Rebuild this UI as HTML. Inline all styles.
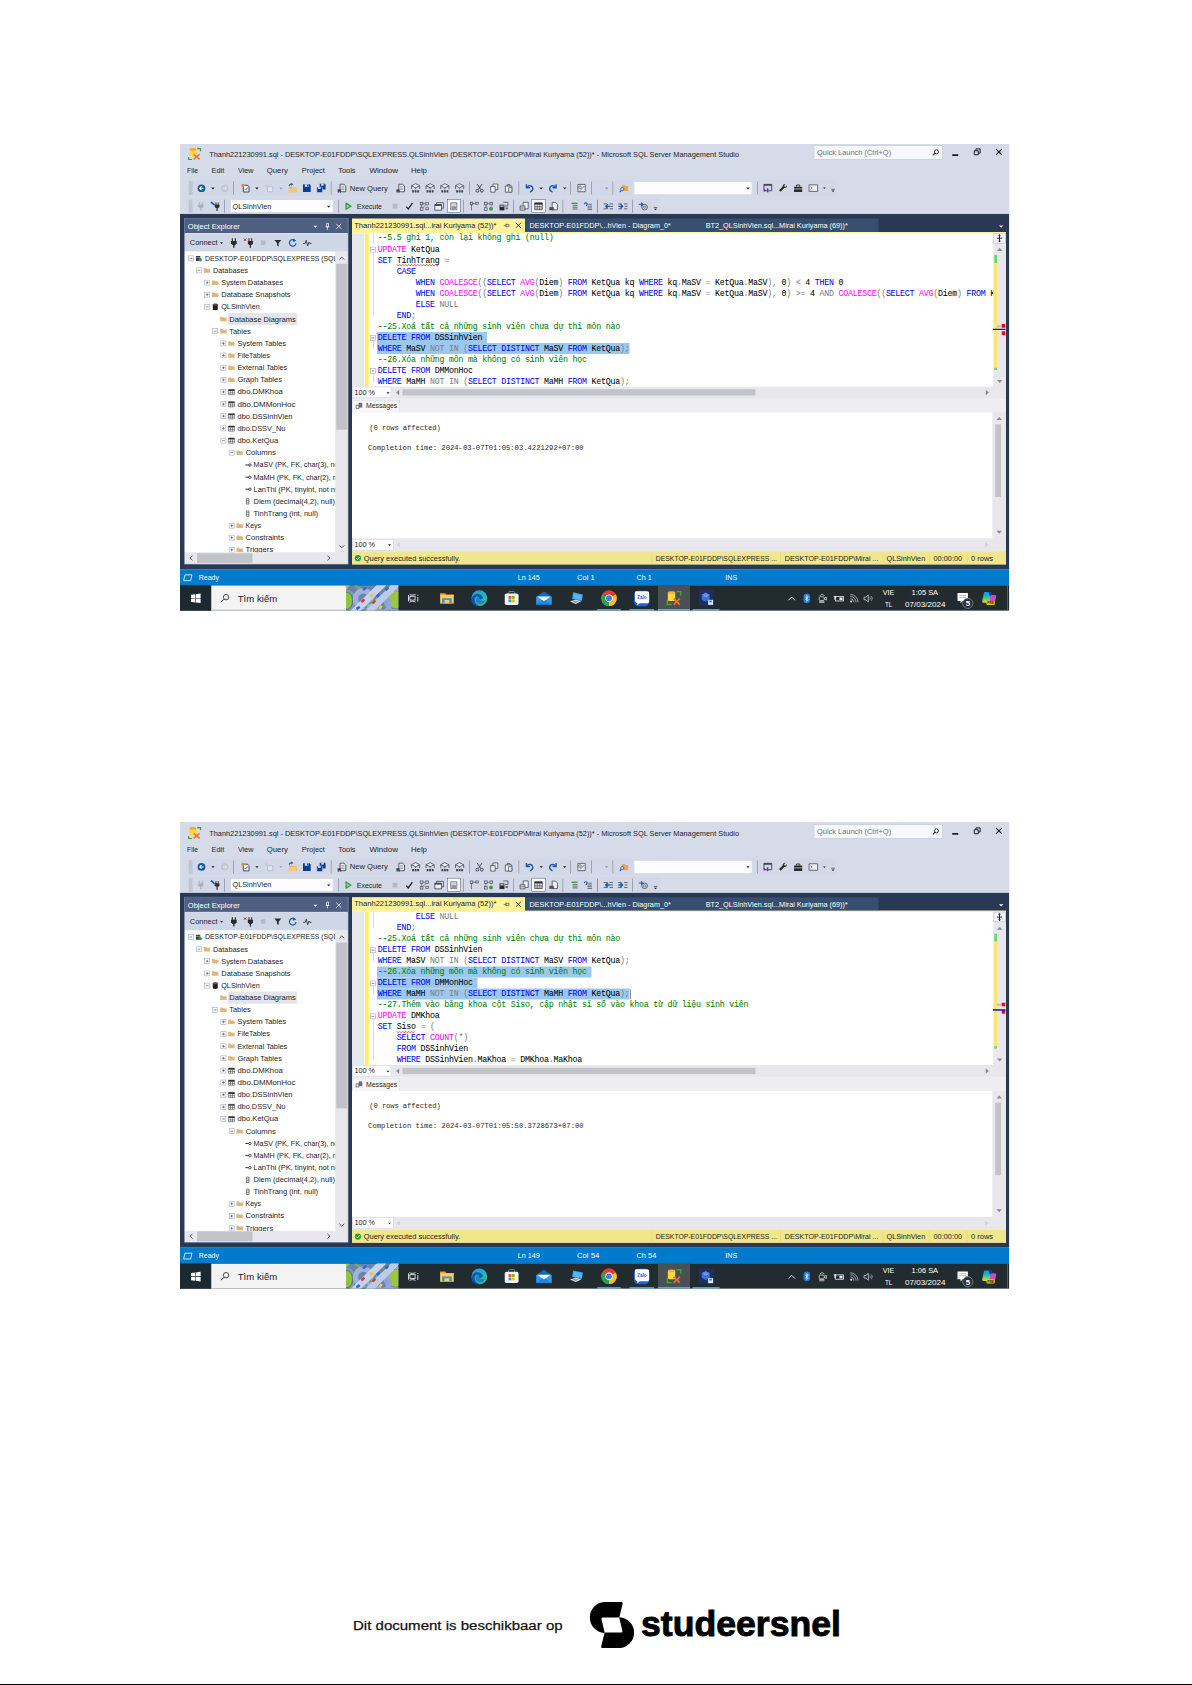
<!DOCTYPE html>
<html><head><meta charset="utf-8"><title>doc</title><style>
html,body{margin:0;padding:0;background:#fff}
body{width:1192px;height:1685px;position:relative;overflow:hidden;font-family:"Liberation Sans",sans-serif}
.shot{position:absolute;width:829.3px;height:466.6px;overflow:hidden;background:#d6dbe9}
.shot div,.shot span,.shot svg,.shot pre{position:absolute;margin:0}
.shot span{white-space:pre;font-family:"Liberation Sans",sans-serif;transform-origin:0 50%}
.shot svg{overflow:visible;display:block}
.clip{overflow:hidden}
pre.cl{font-family:"Liberation Mono",monospace;font-size:8.3px;letter-spacing:-0.231px;line-height:11px;height:11px;color:#000;white-space:pre;-webkit-text-stroke:.04px currentColor}
pre.cl i{font-style:normal}
.c{color:#008000}.k{color:#0000ff}.m{color:#ff00ff}.g{color:#808080}
.sq{text-decoration:underline wavy #e02020;text-decoration-thickness:.5px;text-underline-offset:1.2px}
pre.ms{font-family:"Liberation Mono",monospace;font-size:7.18px;line-height:9.8px;color:#2a2a2a;white-space:pre}
#ft{transform-origin:0 50%;position:absolute;left:353.3px;top:1616.4px;font-size:13.7px;line-height:19px;color:#111;white-space:pre;-webkit-text-stroke:.25px #111}
#lg{position:absolute;left:641.2px;top:1601.5px;font-size:35px;line-height:44px;font-weight:bold;color:#000;white-space:pre;-webkit-text-stroke:.9px #000;transform-origin:0 0}
#zs{position:absolute;left:0;top:0;width:4768px;height:6740px;transform:scale(.25);transform-origin:0 0}
#zz{position:absolute;left:0;top:0;width:1192px;height:1685px;zoom:4}
#bl{position:absolute;left:0;top:1684px;width:1192px;height:1px;background:#000}
</style></head><body><div id="zs"><div id="zz"><div class="shot" style="left:180px;top:144.1px;height:466.6px;"><div style="left:0px;top:69.7px;width:829.3px;height:355.5px;background:#293955;"></div><div style="left:0px;top:0px;width:829.3px;height:69.7px;background:#d6dbe9;"></div><svg style="left:8.05px;top:3.95px" width="13.1" height="12.1" viewBox="0 0 13.1 12.1">
<path d="M.6 9v2.500h3.400" fill="none" stroke="#3a9b35" stroke-width="1.200"></path>
<path d="M9.200.6h3.300v2.600" fill="none" stroke="#3a9b35" stroke-width="1.200"></path>
<path d="M1.400 1.300h7v6c0 1.500-7 1.500-7 0z" fill="#fcd93a"></path>
<ellipse cx="4.900" cy="1.400" rx="3.500" ry="1.300" fill="#f5a834"></ellipse>
<path d="M5.600 6.400l6 5M11.600 6.400l-6 5" stroke="#e8762c" stroke-width="1.500"></path>
</svg><span style="left: 29.2px; top: 5.65px; font-size: 7.5px; line-height: 10px; color: rgb(30, 30, 30); transform: scaleX(0.9805);">Thanh221230991.sql - DESKTOP-E01FDDP\SQLEXPRESS.QLSinhVien (DESKTOP-E01FDDP\Mirai Kuriyama (52))* - Microsoft SQL Server Management Studio</span><div style="left:633.7px;top:1.5px;width:128.8px;height:13.9px;background:#f7f8fc;box-sizing:border-box;border:.6px solid #b4bccf"></div><span style="left: 636.9px; top: 3.25px; font-size: 7.5px; line-height: 10px; color: rgb(109, 114, 132); transform: scaleX(0.9904);">Quick Launch (Ctrl+Q)</span><svg style="left:752.3px;top:5px" width="7" height="7" viewBox="0 0 7 7"><circle cx="4.2" cy="2.8" r="2" fill="none" stroke="#1e1e1e" stroke-width=".9"></circle><path d="M2.8 4.2L.6 6.4" stroke="#1e1e1e" stroke-width="1.1"></path></svg><div style="left:772.3px;top:10.1px;width:6px;height:1.7px;background:#1e1e1e;"></div><svg style="left:793.8px;top:4.2px" width="7" height="7" viewBox="0 0 7 7"><path d="M.5 2.5h4v4h-4z" fill="none" stroke="#1e1e1e" stroke-width="1"></path><path d="M2.2 2.2V.6h4.2v4.2H4.8" fill="none" stroke="#1e1e1e" stroke-width="1"></path></svg><svg style="left:815.7px;top:4.7px" width="6.4" height="6.4" viewBox="0 0 6.4 6.4"><path d="M.4.4l5.6 5.6M6 .4L.4 6" stroke="#1e1e1e" stroke-width="1.1"></path></svg><span style="left: 6.9px; top: 21.55px; font-size: 7.5px; line-height: 10px; color: rgb(30, 30, 30); transform: scaleX(0.9019);">File</span><span style="left: 31.6px; top: 21.55px; font-size: 7.5px; line-height: 10px; color: rgb(30, 30, 30); transform: scaleX(0.9825);">Edit</span><span style="left: 58.1px; top: 21.55px; font-size: 7.5px; line-height: 10px; color: rgb(30, 30, 30); transform: scaleX(0.9677);">View</span><span style="left: 86.8px; top: 21.55px; font-size: 7.5px; line-height: 10px; color: rgb(30, 30, 30); transform: scaleX(1.033);">Query</span><span style="left: 121.8px; top: 21.55px; font-size: 7.5px; line-height: 10px; color: rgb(30, 30, 30); transform: scaleX(0.9853);">Project</span><span style="left: 158.2px; top: 21.55px; font-size: 7.5px; line-height: 10px; color: rgb(30, 30, 30); transform: scaleX(0.9879);">Tools</span><span style="left: 189.5px; top: 21.55px; font-size: 7.5px; line-height: 10px; color: rgb(30, 30, 30); transform: scaleX(1.0684);">Window</span><span style="left: 231px; top: 21.55px; font-size: 7.5px; line-height: 10px; color: rgb(30, 30, 30); transform: scaleX(1.0307);">Help</span><div style="left:6.5px;top:36.5px;width:650px;height:15px;background:#cfd6e5;opacity:.55"></div><div style="left:6.5px;top:54.3px;width:473px;height:14.6px;background:#cfd6e5;opacity:.55"></div><div style="left:8.7px;top:37.2px;width:3.8px;height:13.6px;background:radial-gradient(circle at .45px .45px,#98a1ba .4px,transparent .6px) 0 0/1.9px 1.9px,radial-gradient(circle at 1.4px 1.4px,#98a1ba .4px,transparent .6px) 0 0/1.9px 1.9px;opacity:.75"></div><div style="left:8.7px;top:55.4px;width:3.8px;height:13.6px;background:radial-gradient(circle at .45px .45px,#98a1ba .4px,transparent .6px) 0 0/1.9px 1.9px,radial-gradient(circle at 1.4px 1.4px,#98a1ba .4px,transparent .6px) 0 0/1.9px 1.9px;opacity:.75"></div><svg style="left:16.9px;top:39.6px" width="9" height="9" viewBox="0 0 10 10"><circle cx="5" cy="5" r="4.3" fill="#0f5aa8"></circle><path d="M7.3 5H3.2M5 3L3 5l2 2" fill="none" stroke="#fff" stroke-width="1.2"></path></svg><svg style="left:31.2px;top:43.35px" width="3.4" height="1.9" viewBox="0 0 3.4 1.9"><path d="M0 0H3.4L1.7 1.9Z" fill="#1e1e1e"></path></svg><svg style="left:40.2px;top:39.6px" width="9" height="9" viewBox="0 0 10 10"><circle cx="5" cy="5" r="4.1" fill="#c3c7d1"></circle><path d="M2.8 5h4M5.2 3.2L7 5 5.2 6.8" fill="none" stroke="#e9ebf1" stroke-width="1.1"></path></svg><div style="left:53.2px;top:37.5px;width:0.8px;height:13px;background:#8d92a2;"></div><svg style="left:60.2px;top:38.9px" width="10.2" height="10.2" viewBox="0 0 10 10"><path d="M3 2.2h4.2L8.6 3.8v5H3z" fill="#f6f7fa" stroke="#3b3f4a" stroke-width=".9"></path><path d="M4.3 6.6c1.3-.2 2.4-.6 2.8-2" fill="none" stroke="#3b3f4a" stroke-width=".8"></path><circle cx="2.6" cy="2.3" r="1.5" fill="#ef8a1d"></circle></svg><svg style="left:75.3px;top:43.35px" width="3.4" height="1.9" viewBox="0 0 3.4 1.9"><path d="M0 0H3.4L1.7 1.9Z" fill="#1e1e1e"></path></svg><svg style="left:83.9px;top:38.9px" width="10.2" height="10.2" viewBox="0 0 10 10"><path d="M3.4 3.6h5.2v5H3.4z" fill="#e3e6ee" stroke="#b4b9c6" stroke-width=".8"></path><path d="M1.4 1.4h2.2v2.2H1.4z" fill="#c4c8d4"></path></svg><svg style="left:99.2px;top:43.35px" width="3.4" height="1.9" viewBox="0 0 3.4 1.9"><path d="M0 0H3.4L1.7 1.9Z" fill="#9ba0ae"></path></svg><svg style="left:107.3px;top:38.6px" width="10.4" height="10.4" viewBox="0 0 10 10"><path d="M1.6 3.600h2.600l.8.900h4.200v4.700H1.600z" fill="#e9b45c"></path><path d="M.8 9.200l1.600-3.800h7.200L8 9.200z" fill="#f3c878"></path><path d="M1.400 3.200C1.600 1.600 2.600.8 4 .8V0l1.800 1.500L4 3V2.200c-.9 0-1.400.4-1.500 1z" fill="#1d5fb4"></path></svg><svg style="left:121.8px;top:38.9px" width="10.2" height="10.2" viewBox="0 0 10 10"><path d="M1.2 1.2h6.6l1 1v6.6H1.2z" fill="#0d3e8e"></path><rect x="3" y="1.2" width="3.6" height="2.6" fill="#d6dbe9"></rect><rect x="5.2" y="1.6" width="1" height="1.8" fill="#0d3e8e"></rect></svg><svg style="left:136px;top:38.9px" width="10.2" height="10.2" viewBox="0 0 10 10"><path d="M3.6.8h5l.8.8v4.8H3.6z" fill="#0d3e8e"></path><rect x="5" y=".8" width="2.6" height="1.8" fill="#d6dbe9"></rect><path d="M.8 4h4.8l.8.8v4.6H.8z" fill="#0d3e8e" stroke="#d6dbe9" stroke-width=".5"></path><rect x="2" y="4.2" width="2.6" height="1.7" fill="#d6dbe9"></rect></svg><div style="left:150.8px;top:37.5px;width:0.8px;height:13px;background:#8d92a2;"></div><svg style="left:156.9px;top:38.9px" width="10.2" height="10.2" viewBox="0 0 10 10"><path d="M3 1.2h3.8L8.6 3v5.6H3z" fill="#eef0f5" stroke="#4a4e59" stroke-width=".9"></path><path d="M4.2 3.6h3M4.2 5h3M4.2 6.4h3" stroke="#777c8a" stroke-width=".6"></path><path d="M.6 6.2h3.2v2.2H.6z" fill="#3b3f4a"></path><circle cx="1.4" cy="8.9" r=".7" fill="#3b3f4a"></circle><circle cx="3.2" cy="8.9" r=".7" fill="#3b3f4a"></circle></svg><span style="left: 169.8px; top: 39.05px; font-size: 7.5px; line-height: 10px; color: rgb(30, 30, 30); transform: scaleX(1.0157);">New Query</span><svg style="left:215.7px;top:38.9px" width="10.2" height="10.2" viewBox="0 0 10 10"><path d="M3 1.2h3.8L8.6 3v5.6H3z" fill="#eef0f5" stroke="#4a4e59" stroke-width=".9"></path><path d="M4.2 3.6h3M4.2 5h3M4.2 6.4h3" stroke="#777c8a" stroke-width=".6"></path><path d="M.6 6.2h3.2v2.2H.6z" fill="#3b3f4a"></path><circle cx="1.4" cy="8.9" r=".7" fill="#3b3f4a"></circle><circle cx="3.2" cy="8.9" r=".7" fill="#3b3f4a"></circle></svg><svg style="left:230.5px;top:38.9px" width="10.2" height="10.2" viewBox="0 0 10 10"><path d="M5 .7L9 2.700 5 4.700 1 2.700z" fill="#eef0f5" stroke="#4a4e59" stroke-width=".8" stroke-linejoin="round"></path><path d="M1 2.700v3.300M9 2.700v3.300M5 4.700v1.500" stroke="#4a4e59" stroke-width=".8"></path><path d="M1.600 7h1.800v2.200H1.600zM4.100 7h1.800v2.200H4.100zM6.600 7h1.800v2.200H6.600z" fill="#3b3f4a"></path></svg><svg style="left:245.1px;top:38.9px" width="10.2" height="10.2" viewBox="0 0 10 10"><path d="M5 .7L9 2.700 5 4.700 1 2.700z" fill="#eef0f5" stroke="#4a4e59" stroke-width=".8" stroke-linejoin="round"></path><path d="M1 2.700v3.300M9 2.700v3.300M5 4.700v1.500" stroke="#4a4e59" stroke-width=".8"></path><path d="M1.600 7h1.800v2.200H1.600zM4.100 7h1.800v2.200H4.100zM6.600 7h1.800v2.200H6.600z" fill="#3b3f4a"></path></svg><svg style="left:259.8px;top:38.9px" width="10.2" height="10.2" viewBox="0 0 10 10"><path d="M5 .7L9 2.700 5 4.700 1 2.700z" fill="#eef0f5" stroke="#4a4e59" stroke-width=".8" stroke-linejoin="round"></path><path d="M1 2.700v3.300M9 2.700v3.300M5 4.700v1.500" stroke="#4a4e59" stroke-width=".8"></path><path d="M1.600 7h1.800v2.200H1.600zM4.100 7h1.800v2.200H4.100zM6.600 7h1.800v2.200H6.600z" fill="#3b3f4a"></path></svg><svg style="left:274.6px;top:38.9px" width="10.2" height="10.2" viewBox="0 0 10 10"><path d="M5 .7L9 2.700 5 4.700 1 2.700z" fill="#eef0f5" stroke="#4a4e59" stroke-width=".8" stroke-linejoin="round"></path><path d="M1 2.700v3.300M9 2.700v3.300M5 4.700v1.500" stroke="#4a4e59" stroke-width=".8"></path><path d="M1.600 7h1.800v2.200H1.600zM4.100 7h1.800v2.200H4.100zM6.600 7h1.800v2.200H6.600z" fill="#3b3f4a"></path></svg><div style="left:288.9px;top:37.5px;width:0.8px;height:13px;background:#8d92a2;"></div><svg style="left:294.6px;top:38.9px" width="10.2" height="10.2" viewBox="0 0 10 10"><path d="M2.6 1l3.6 5.4M7.4 1L3.8 6.4" stroke="#3b3f4a" stroke-width=".9"></path><circle cx="2.8" cy="7.6" r="1.4" fill="none" stroke="#3b3f4a" stroke-width=".9"></circle><circle cx="7.2" cy="7.6" r="1.4" fill="none" stroke="#3b3f4a" stroke-width=".9"></circle></svg><svg style="left:309.3px;top:38.9px" width="10.2" height="10.2" viewBox="0 0 10 10"><path d="M3.6 1h4.8v5.6H3.6z" fill="#eef0f5" stroke="#4a4e59" stroke-width=".8"></path><path d="M1.4 3.4h4.4V9H1.4z" fill="#eef0f5" stroke="#4a4e59" stroke-width=".8"></path></svg><svg style="left:323.6px;top:38.9px" width="10.2" height="10.2" viewBox="0 0 10 10"><path d="M1.8 3h6.4v6H1.8z" fill="#eef0f5" stroke="#4a4e59" stroke-width=".8"></path><path d="M3.6 3V1.6h2.8V3" fill="none" stroke="#4a4e59" stroke-width=".8"></path><path d="M5 4.6h3.2V9H5z" fill="#eef0f5" stroke="#4a4e59" stroke-width=".7"></path></svg><div style="left:338.4px;top:37.5px;width:0.8px;height:13px;background:#8d92a2;"></div><svg style="left:343.9px;top:38.3px" width="11" height="11" viewBox="0 0 10 10"><path d="M2.2 1.6v3.2h3.2" fill="none" stroke="#1a5db0" stroke-width="1.3"></path><path d="M2.6 4.4C4 2.4 7.4 2.4 8 5.2c.3 1.6-.8 2.8-2.6 3.6" fill="none" stroke="#1a5db0" stroke-width="1.3"></path></svg><svg style="left:359.6px;top:43.35px" width="3.4" height="1.9" viewBox="0 0 3.4 1.9"><path d="M0 0H3.4L1.7 1.9Z" fill="#1e1e1e"></path></svg><svg style="left:367.4px;top:38.3px" width="11" height="11" viewBox="0 0 10 10"><path d="M7.8 1.6v3.2H4.6" fill="none" stroke="#1a5db0" stroke-width="1.3"></path><path d="M7.4 4.4C6 2.4 2.6 2.4 2 5.2c-.3 1.6.8 2.8 2.6 3.6" fill="none" stroke="#1a5db0" stroke-width="1.3"></path></svg><svg style="left:383.1px;top:43.35px" width="3.4" height="1.9" viewBox="0 0 3.4 1.9"><path d="M0 0H3.4L1.7 1.9Z" fill="#1e1e1e"></path></svg><div style="left:389.9px;top:37.5px;width:0.8px;height:13px;background:#8d92a2;"></div><svg style="left:396.6px;top:38.9px" width="10.2" height="10.2" viewBox="0 0 10 10"><path d="M1.4 1.4h7.2v7.2H1.4z" fill="#e9ecf3" stroke="#5a5f6b" stroke-width=".9"></path><circle cx="3.4" cy="4" r="1.3" fill="none" stroke="#5a5f6b" stroke-width=".7"></circle><path d="M3.6 7.4L7.6 3" stroke="#5a5f6b" stroke-width=".8"></path></svg><div style="left:411.2px;top:37.5px;width:0.8px;height:13px;background:#8d92a2;"></div><svg style="left:425px;top:43.35px" width="3.4" height="1.9" viewBox="0 0 3.4 1.9"><path d="M0 0H3.4L1.7 1.9Z" fill="#8d92a1"></path></svg><div style="left:432.4px;top:37.5px;width:0.8px;height:13px;background:#8d92a2;"></div><svg style="left:438.9px;top:38.9px" width="10.2" height="10.2" viewBox="0 0 10 10"><path d="M3 2h2.4l.8.9H9v4.9H3z" fill="#e7a944"></path><circle cx="3.2" cy="6" r="1.6" fill="#d6dbe9" stroke="#1a5db0" stroke-width=".8"></circle><path d="M2.2 7.2L.8 9" stroke="#1a5db0" stroke-width="1"></path></svg><div style="left:453.8px;top:37.3px;width:118.5px;height:13.5px;background:#fdfdff;box-sizing:border-box;border:.6px solid #c3c9d9"></div><svg style="left:566.3px;top:43.35px" width="3.4" height="1.9" viewBox="0 0 3.4 1.9"><path d="M0 0H3.4L1.7 1.9Z" fill="#1e1e1e"></path></svg><div style="left:577.3px;top:37.5px;width:0.8px;height:13px;background:#8d92a2;"></div><svg style="left:582.8px;top:38.9px" width="10.2" height="10.2" viewBox="0 0 10 10"><path d="M1.2 1.4h7.6v6.2H1.2z" fill="none" stroke="#3b3f4a" stroke-width=".9"></path><path d="M1.2 1.4h7.6v1.4H1.2z" fill="#3b3f4a"></path><path d="M1 5.6l2.2 1.6L1 8.8zM4.6 5l-1 2.2 1 2.2.9-.4V5.4z" fill="#7b2fa0"></path></svg><svg style="left:598.1px;top:38.9px" width="10.2" height="10.2" viewBox="0 0 10 10"><path d="M8.6 2.2L7 3.8 5.8 2.6 7.4 1C6 .6 4.4 1.600 4.600 3.400L1 7l1.600 1.600L6.200 5c1.800.200 2.800-1.400 2.400-2.800z" fill="#2b2b2b"></path></svg><svg style="left:612.9px;top:38.9px" width="10.2" height="10.2" viewBox="0 0 10 10"><path d="M1 3.600h8v5.200H1z" fill="#2b2b2b"></path><path d="M3.400 3.600V2h3.200v1.600" fill="none" stroke="#2b2b2b" stroke-width=".9"></path><path d="M1 5.800h8" stroke="#d6dbe9" stroke-width=".7"></path></svg><svg style="left:628.2px;top:38.9px" width="10.2" height="10.2" viewBox="0 0 10 10"><path d="M.8 1.800h8.400v6.400H.8z" fill="#eef0f5" stroke="#4a4e59" stroke-width=".8"></path><path d="M2.400 3.800l1.400 1.200-1.400 1.200" fill="none" stroke="#4a4e59" stroke-width=".7"></path></svg><svg style="left:642.9px;top:43.5px" width="2.8" height="1.6" viewBox="0 0 2.8 1.6"><path d="M0 0H2.8L1.4 1.6Z" fill="#1e1e1e"></path></svg><svg style="left:649.9px;top:43.2px" width="6" height="6" viewBox="0 0 10 10"><path d="M2 3.400h6" stroke="#1e1e1e" stroke-width="1"></path><path d="M2.400 5.400h5.200L5 8z" fill="#1e1e1e"></path></svg><svg style="left:15.7px;top:57.1px" width="10.2" height="10.2" viewBox="0 0 10 10"><path d="M3.600.8v2.400M6.400.8v2.400" stroke="#a9aebb" stroke-width=".9"></path><path d="M2.400 3.200h5.200v2.200L6.200 6.800H3.800L2.400 5.400z" fill="#a9aebb"></path><path d="M5 6.800v2.600" stroke="#a9aebb" stroke-width="1"></path></svg><svg style="left:30.3px;top:57.1px" width="10.2" height="10.2" viewBox="0 0 10 10"><path d="M5.600 1.200v2.200M7.800 1.200v2.200" stroke="#2b2b2b" stroke-width=".9"></path><path d="M4.400 3.200h4.600v2.200L7.800 6.800H5.600L4.400 5.400z" fill="#2b2b2b"></path><path d="M6.700 6.800v2.800" stroke="#2b2b2b" stroke-width="1.200"></path><path d="M.8.800l3.600 3" stroke="#1a5db0" stroke-width="1.600"></path><path d="M.4 1.800L1.800.4" stroke="#1a5db0" stroke-width=".8"></path></svg><div style="left:44.3px;top:55.7px;width:0.8px;height:13px;background:#8d92a2;"></div><div style="left:50.5px;top:55.4px;width:102.7px;height:13.1px;background:#fdfdff;box-sizing:border-box;border:.6px solid #c3c9d9"></div><span style="left: 52.6px; top: 56.85px; font-size: 7.5px; line-height: 10px; color: rgb(30, 30, 30); transform: scaleX(0.9726);">QLSinhVien</span><svg style="left:147px;top:61.55px" width="3.4" height="1.9" viewBox="0 0 3.4 1.9"><path d="M0 0H3.4L1.7 1.9Z" fill="#1e1e1e"></path></svg><div style="left:158px;top:55.7px;width:0.8px;height:13px;background:#8d92a2;"></div><svg style="left:163.9px;top:58px" width="8.4" height="8.4" viewBox="0 0 10 10"><path d="M2.400 1.200L8.400 5l-6 3.800z" fill="#8fd08f" stroke="#2f9a35" stroke-width="1.300" stroke-linejoin="round"></path></svg><span style="left: 176.8px; top: 57.25px; font-size: 7.5px; line-height: 10px; color: rgb(30, 30, 30); transform: scaleX(0.9298);">Execute</span><svg style="left:211.1px;top:58.2px" width="8" height="8" viewBox="0 0 10 10"><rect x="2" y="2" width="6" height="6" fill="#b5b9c5"></rect></svg><svg style="left:225.1px;top:57.9px" width="8.6" height="8.6" viewBox="0 0 10 10"><path d="M1.400 5.400l2.400 2.800L8.600 1.400" fill="none" stroke="#1e1e1e" stroke-width="1.500"></path></svg><svg style="left:239.2px;top:57.1px" width="10.2" height="10.2" viewBox="0 0 10 10"><rect x="1" y="1" width="2.600" height="2.600" fill="none" stroke="#4a4e59" stroke-width=".7"></rect><rect x="6.400" y="1" width="2.600" height="2.600" fill="none" stroke="#4a4e59" stroke-width=".7"></rect><rect x="1" y="6.400" width="2.600" height="2.600" fill="none" stroke="#4a4e59" stroke-width=".7"></rect><rect x="6.400" y="6.400" width="2.600" height="2" fill="none" stroke="#4a4e59" stroke-width=".7"></rect><path d="M3.600 2.300h2.800M2.300 3.600v2.800M3.600 6.600L6.400 3.600" stroke="#4a4e59" stroke-width=".6"></path></svg><svg style="left:254px;top:57.1px" width="10.2" height="10.2" viewBox="0 0 10 10"><path d="M2.600 1.400h6.600v5.400H2.600z" fill="#eef0f5" stroke="#3b3f4a" stroke-width=".8"></path><path d="M.8 3.200h6.600v5.600H.8z" fill="#eef0f5" stroke="#3b3f4a" stroke-width=".8"></path><path d="M.8 3.200h6.600v1.400H.8z" fill="#3b3f4a"></path></svg><div style="left:267.1px;top:55.1px;width:13.4px;height:13.6px;background:#f8f9fc;box-sizing:border-box;border:.7px solid #3d4d72"></div><svg style="left:269.5px;top:57.9px" width="8.6" height="8.6" viewBox="0 0 10 10"><path d="M1.400 1h7.200v8H1.400z" fill="#d5d8e0" stroke="#5a5f6b" stroke-width=".8"></path><rect x="2.400" y="5" width="5.200" height="3.200" fill="#8d919c"></rect></svg><div style="left:283px;top:55.7px;width:0.8px;height:13px;background:#8d92a2;"></div><svg style="left:289.2px;top:57.1px" width="10.2" height="10.2" viewBox="0 0 10 10"><rect x="1" y="1" width="2.400" height="2.400" fill="none" stroke="#4a4e59" stroke-width=".7"></rect><rect x="6.400" y="1" width="2.400" height="2" fill="none" stroke="#4a4e59" stroke-width=".7"></rect><path d="M3.400 2.200h3M2.200 3.400V9" stroke="#4a4e59" stroke-width=".7"></path></svg><svg style="left:303.5px;top:57.1px" width="10.2" height="10.2" viewBox="0 0 10 10"><rect x="1" y="1" width="2.600" height="2.600" fill="none" stroke="#4a4e59" stroke-width=".7"></rect><rect x="6.400" y="1" width="2.600" height="2.600" fill="none" stroke="#4a4e59" stroke-width=".7"></rect><rect x="1" y="6.400" width="2.600" height="2.600" fill="none" stroke="#4a4e59" stroke-width=".7"></rect><path d="M3.600 2.300h2.800M2.300 3.600v2.800" stroke="#4a4e59" stroke-width=".6"></path><circle cx="7.400" cy="7.400" r="1.900" fill="#3c9b3c"></circle></svg><svg style="left:318.6px;top:57.1px" width="10.2" height="10.2" viewBox="0 0 10 10"><path d="M1 3.400h4.800V9H1z" fill="#2b2b2b"></path><path d="M1.800 4.200h3.200v1.200H1.800z" fill="#d6dbe9"></path><path d="M4.600 1h4.600v3.600H6.400" fill="none" stroke="#4a4e59" stroke-width=".8"></path><path d="M6.800 6h2.400v2H6.800z" fill="#6a6f7c"></path></svg><div style="left:333px;top:55.7px;width:0.8px;height:13px;background:#8d92a2;"></div><svg style="left:339.3px;top:57.1px" width="10.2" height="10.2" viewBox="0 0 10 10"><path d="M3.800 1h5v6.400h-5z" fill="#eef0f5" stroke="#4a4e59" stroke-width=".8"></path><path d="M.8 4.600h4.800v4.200H.8z" fill="#c9cdd8" stroke="#4a4e59" stroke-width=".7"></path><path d="M.8 6.600h4.800" stroke="#4a4e59" stroke-width=".5"></path></svg><div style="left:351.4px;top:55.1px;width:14.3px;height:13.6px;background:#f8f9fc;box-sizing:border-box;border:.7px solid #3d4d72"></div><svg style="left:354px;top:57.7px" width="9" height="9" viewBox="0 0 10 10"><path d="M.8 1.200h8.400v7.600H.8z" fill="#fff" stroke="#2b2b2b" stroke-width=".8"></path><path d="M.8 1.200h8.400v2H.8z" fill="#2b2b2b"></path><path d="M.8 5.200h8.400M.8 7h8.400M3.600 3.200v5.600M6.400 3.200v5.600" stroke="#2b2b2b" stroke-width=".6"></path></svg><svg style="left:368.5px;top:57.1px" width="10.2" height="10.2" viewBox="0 0 10 10"><path d="M3.600 1.200h3.400L8.800 3v5.400H3.600z" fill="#eef0f5" stroke="#4a4e59" stroke-width=".8"></path><path d="M.8 5.800h4.400v3H.8z" fill="#4a4e59"></path></svg><div style="left:382.4px;top:55.7px;width:0.8px;height:13px;background:#8d92a2;"></div><svg style="left:389.2px;top:57.5px" width="9.4" height="9.4" viewBox="0 0 10 10"><path d="M2.400 2h6.400" stroke="#3c9b3c" stroke-width="1.500"></path><path d="M3.600 4.400h5.200M3.600 6.200h5.200M3.600 8h5.200" stroke="#555b66" stroke-width=".9"></path></svg><svg style="left:403.3px;top:57.5px" width="9.4" height="9.4" viewBox="0 0 10 10"><path d="M1 2.800C1.400 1 4.200 1 4.200 2.800 4.200 3.800 3.200 3.800 3.200 4.800" fill="none" stroke="#1a5db0" stroke-width="1.200"></path><path d="M5.400 3h3.800M4.600 5h4.600M4.600 6.800h4.600M4.600 8.600h4.600" stroke="#555b66" stroke-width=".9"></path></svg><div style="left:417.1px;top:55.7px;width:0.8px;height:13px;background:#8d92a2;"></div><svg style="left:423.3px;top:57.1px" width="10.2" height="10.2" viewBox="0 0 10 10"><path d="M.4 2.600h3.400M6.200 2.600h3.400M.4 7.400h3.400M6.200 7.400h3.400M6.600 5h3" stroke="#555b66" stroke-width=".9"></path><path d="M6.600 5H2.800M4.600 2.800L2.400 5l2.200 2.200" fill="none" stroke="#1a5db0" stroke-width="1.300"></path></svg><svg style="left:437.8px;top:57.1px" width="10.2" height="10.2" viewBox="0 0 10 10"><path d="M.4 2.600h3.400M6.200 2.600h3.400M.4 7.400h3.400M6.200 7.400h3.400M6.800 5h2.800" stroke="#555b66" stroke-width=".9"></path><path d="M.6 5h3.800M2.600 2.800L4.800 5 2.600 7.200" fill="none" stroke="#1a5db0" stroke-width="1.300"></path></svg><div style="left:452px;top:55.7px;width:0.8px;height:13px;background:#8d92a2;"></div><svg style="left:458.2px;top:57.1px" width="10.2" height="10.2" viewBox="0 0 10 10"><circle cx="6.200" cy="5.800" r="2.800" fill="none" stroke="#4a4e59" stroke-width=".8"></circle><circle cx="6.200" cy="5.800" r="1.200" fill="none" stroke="#4a4e59" stroke-width=".6"></circle><path d="M.6 3h3.600M2.800 1.400L4.400 3 2.800 4.600" fill="none" stroke="#1a5db0" stroke-width="1.100"></path></svg><svg style="left:472.6px;top:61.4px" width="6" height="6" viewBox="0 0 10 10"><path d="M2 3.400h6" stroke="#1e1e1e" stroke-width="1"></path><path d="M2.400 5.400h5.200L5 8z" fill="#1e1e1e"></path></svg><div style="left:4.2px;top:73.9px;width:164.2px;height:346.4px;background:#8593b4;"></div><div style="left:4.8px;top:74.2px;width:163px;height:15.2px;background:#4d6082;"></div><span style="left: 7.8px; top: 77.05px; font-size: 8px; line-height: 10px; color: rgb(255, 255, 255); transform: scaleX(0.945);">Object Explorer</span><svg style="left:133.6px;top:81.65px" width="3.8" height="2.1" viewBox="0 0 3.8 2.1"><path d="M0 0H3.8L1.9 2.1Z" fill="#ffffff"></path></svg><svg style="left:145px;top:78.8px" width="5" height="7" viewBox="0 0 5 7"><path d="M1.500.500h2v3.200h-2z" fill="none" stroke="#fff" stroke-width=".7"></path><path d="M.6 3.900h3.800M2.500 3.900v2.800" stroke="#fff" stroke-width=".7"></path></svg><svg style="left:156.1px;top:79.5px" width="5.6" height="5.6" viewBox="0 0 5.6 5.6"><path d="M.3.300l5 5M5.300.3l-5 5" stroke="#fff" stroke-width=".8"></path></svg><div style="left:5px;top:88.9px;width:162.6px;height:330.6px;background:#e4e6ee;"></div><div style="left:4.8px;top:89.4px;width:163px;height:18.1px;background:#cfd6e5;"></div><span style="left: 9.8px; top: 93.35px; font-size: 7.8px; line-height: 10px; color: rgb(30, 30, 30); transform: scaleX(0.9572);">Connect</span><svg style="left:40px;top:98.25px" width="3" height="1.7" viewBox="0 0 3 1.7"><path d="M0 0H3L1.5 1.7Z" fill="#1e1e1e"></path></svg><svg style="left:48.7px;top:93.7px" width="10.2" height="10.2" viewBox="0 0 10 10"><path d="M3.500.6v2.800M6.500.6v2.800" stroke="#2b2b2b" stroke-width="1.100"></path><path d="M2.200 3.200h5.600v2.400L6.400 7.200H3.600L2.200 5.600z" fill="#2b2b2b"></path><path d="M5 7v2.800" stroke="#2b2b2b" stroke-width="1.300"></path></svg><svg style="left:63.3px;top:93.7px" width="10.2" height="10.2" viewBox="0 0 10 10"><path d="M5.700.6v2.800M8.300.6v2.800" stroke="#2b2b2b" stroke-width="1"></path><path d="M4.500 3.200h5v2.400L8.300 7.200H5.700L4.500 5.600z" fill="#2b2b2b"></path><path d="M7 7v2.800" stroke="#2b2b2b" stroke-width="1.200"></path><path d="M.6.800l2.400 2.400M3 .8L.6 3.200" stroke="#d32424" stroke-width=".9"></path></svg><svg style="left:79.6px;top:95px" width="7.4" height="7.4" viewBox="0 0 10 10"><rect x="2" y="2" width="6" height="6" fill="#b5b9c5"></rect></svg><svg style="left:93.8px;top:94.8px" width="8.2" height="8.2" viewBox="0 0 10 10"><path d="M.8 1.200h8.400L6 5v4L4 7.800V5z" fill="#2b2b2b"></path></svg><svg style="left:108.1px;top:94px" width="9.4" height="9.4" viewBox="0 0 10 10"><path d="M7.900 3.200A3.500 3.500 0 1 0 8.500 5.600" fill="none" stroke="#1a5db0" stroke-width="1.300"></path><path d="M5.400.4l3.200 2.400-3.400 1.400z" fill="#1a5db0"></path></svg><svg style="left:122.8px;top:94.5px" width="9.2" height="9.2" viewBox="0 0 10 10"><path d="M.4 5.400h2.200L3.800 2l1.600 6 1.400-4 .8 1.400h2" fill="none" stroke="#2b2b2b" stroke-width=".9"></path></svg><div class="clip" style="left:4.8px;top:107.5px;width:150.8px;height:300.9px;background:#fff"><div style="left:43px;top:61.3px;width:69.4px;height:12.1px;background:#e4e5ea;"></div><svg style="left:3.1px;top:3.8px" width="5.8" height="5.8" viewBox="0 0 5.8 5.8"><rect x=".4" y=".4" width="5" height="5" fill="#fff" stroke="#a4a9b8" stroke-width=".6"></rect><path d="M1.500 2.900h2.800" stroke="#5b6577" stroke-width=".7"></path></svg><svg style="left:10.8px;top:3.5px" width="6.6" height="6.6" viewBox="0 0 6.6 6.6"><path d="M.4 1h4.400v5H.4z" fill="#3a3d46"></path><path d="M.4 2.600h4.400" stroke="#d8dbe3" stroke-width=".5"></path><circle cx="4.800" cy="4.800" r="1.700" fill="#2f9e3b"></circle></svg><span class="tr" style="left: 20.1px; top: 1.35px; font-size: 8px; line-height: 10px; color: rgb(30, 30, 30); transform: scaleX(0.8609);">DESKTOP-E01FDDP\SQLEXPRESS (SQL</span><svg style="left:11.25px;top:15.95px" width="5.8" height="5.8" viewBox="0 0 5.8 5.8"><rect x=".4" y=".4" width="5" height="5" fill="#fff" stroke="#a4a9b8" stroke-width=".6"></rect><path d="M1.500 2.900h2.800" stroke="#5b6577" stroke-width=".7"></path></svg><svg style="left:19.05px;top:15.65px" width="6.4" height="5.4" viewBox="0 0 6.4 5.4"><path d="M0 .9h2.400l.7.800h3.300v3.700H0z" fill="#dcb67a"></path></svg><span class="tr" style="left: 28.22px; top: 13.5px; font-size: 8px; line-height: 10px; color: rgb(30, 30, 30); transform: scaleX(0.912);">Databases</span><svg style="left:19.4px;top:28.1px" width="5.8" height="5.8" viewBox="0 0 5.8 5.8"><rect x=".4" y=".4" width="5" height="5" fill="#fff" stroke="#a4a9b8" stroke-width=".6"></rect><path d="M1.500 2.900h2.800" stroke="#5b6577" stroke-width=".7"></path><path d="M2.900 1.500v2.800" stroke="#4b5567" stroke-width=".7"></path></svg><svg style="left:27.2px;top:27.8px" width="6.4" height="5.4" viewBox="0 0 6.4 5.4"><path d="M0 .9h2.400l.7.800h3.300v3.700H0z" fill="#dcb67a"></path></svg><span class="tr" style="left: 36.34px; top: 25.65px; font-size: 8px; line-height: 10px; color: rgb(30, 30, 30); transform: scaleX(0.9213);">System Databases</span><svg style="left:19.4px;top:40.25px" width="5.8" height="5.8" viewBox="0 0 5.8 5.8"><rect x=".4" y=".4" width="5" height="5" fill="#fff" stroke="#a4a9b8" stroke-width=".6"></rect><path d="M1.500 2.900h2.800" stroke="#5b6577" stroke-width=".7"></path><path d="M2.900 1.500v2.800" stroke="#4b5567" stroke-width=".7"></path></svg><svg style="left:27.2px;top:39.95px" width="6.4" height="5.4" viewBox="0 0 6.4 5.4"><path d="M0 .9h2.400l.7.800h3.300v3.700H0z" fill="#dcb67a"></path></svg><span class="tr" style="left: 36.34px; top: 37.8px; font-size: 8px; line-height: 10px; color: rgb(30, 30, 30); transform: scaleX(0.9338);">Database Snapshots</span><svg style="left:19.4px;top:52.4px" width="5.8" height="5.8" viewBox="0 0 5.8 5.8"><rect x=".4" y=".4" width="5" height="5" fill="#fff" stroke="#a4a9b8" stroke-width=".6"></rect><path d="M1.500 2.900h2.800" stroke="#5b6577" stroke-width=".7"></path></svg><svg style="left:27.6px;top:52px" width="5.6" height="6.8" viewBox="0 0 5.6 6.8"><path d="M.3 1.200h5v4.600c0 1.200-5 1.200-5 0z" fill="#222"></path><ellipse cx="2.800" cy="1.300" rx="2.500" ry="1.100" fill="#555" stroke="#222" stroke-width=".4"></ellipse></svg><span class="tr" style="left: 36.34px; top: 49.95px; font-size: 8px; line-height: 10px; color: rgb(30, 30, 30); transform: scaleX(0.9039);">QLSinhVien</span><svg style="left:35.35px;top:64.25px" width="6.4" height="5.4" viewBox="0 0 6.4 5.4"><path d="M0 .9h2.400l.7.800h3.300v3.700H0z" fill="#dcb67a"></path></svg><span class="tr" style="left: 44.46px; top: 62.1px; font-size: 8px; line-height: 10px; color: rgb(30, 30, 30); transform: scaleX(0.9412);">Database Diagrams</span><svg style="left:27.55px;top:76.7px" width="5.8" height="5.8" viewBox="0 0 5.8 5.8"><rect x=".4" y=".4" width="5" height="5" fill="#fff" stroke="#a4a9b8" stroke-width=".6"></rect><path d="M1.500 2.900h2.800" stroke="#5b6577" stroke-width=".7"></path></svg><svg style="left:35.35px;top:76.4px" width="6.4" height="5.4" viewBox="0 0 6.4 5.4"><path d="M0 .9h2.400l.7.800h3.300v3.700H0z" fill="#dcb67a"></path></svg><span class="tr" style="left: 44.46px; top: 74.25px; font-size: 8px; line-height: 10px; color: rgb(30, 30, 30); transform: scaleX(0.9315);">Tables</span><svg style="left:35.7px;top:88.85px" width="5.8" height="5.8" viewBox="0 0 5.8 5.8"><rect x=".4" y=".4" width="5" height="5" fill="#fff" stroke="#a4a9b8" stroke-width=".6"></rect><path d="M1.500 2.900h2.800" stroke="#5b6577" stroke-width=".7"></path><path d="M2.900 1.500v2.800" stroke="#4b5567" stroke-width=".7"></path></svg><svg style="left:43.5px;top:88.55px" width="6.4" height="5.4" viewBox="0 0 6.4 5.4"><path d="M0 .9h2.400l.7.800h3.300v3.700H0z" fill="#dcb67a"></path></svg><span class="tr" style="left: 52.58px; top: 86.4px; font-size: 8px; line-height: 10px; color: rgb(30, 30, 30); transform: scaleX(0.9373);">System Tables</span><svg style="left:35.7px;top:101px" width="5.8" height="5.8" viewBox="0 0 5.8 5.8"><rect x=".4" y=".4" width="5" height="5" fill="#fff" stroke="#a4a9b8" stroke-width=".6"></rect><path d="M1.500 2.900h2.800" stroke="#5b6577" stroke-width=".7"></path><path d="M2.900 1.500v2.800" stroke="#4b5567" stroke-width=".7"></path></svg><svg style="left:43.5px;top:100.7px" width="6.4" height="5.4" viewBox="0 0 6.4 5.4"><path d="M0 .9h2.400l.7.800h3.300v3.700H0z" fill="#dcb67a"></path></svg><span class="tr" style="left: 52.58px; top: 98.55px; font-size: 8px; line-height: 10px; color: rgb(30, 30, 30); transform: scaleX(0.9002);">FileTables</span><svg style="left:35.7px;top:113.15px" width="5.8" height="5.8" viewBox="0 0 5.8 5.8"><rect x=".4" y=".4" width="5" height="5" fill="#fff" stroke="#a4a9b8" stroke-width=".6"></rect><path d="M1.500 2.900h2.800" stroke="#5b6577" stroke-width=".7"></path><path d="M2.900 1.500v2.800" stroke="#4b5567" stroke-width=".7"></path></svg><svg style="left:43.5px;top:112.85px" width="6.4" height="5.4" viewBox="0 0 6.4 5.4"><path d="M0 .9h2.400l.7.800h3.300v3.700H0z" fill="#dcb67a"></path></svg><span class="tr" style="left: 52.58px; top: 110.7px; font-size: 8px; line-height: 10px; color: rgb(30, 30, 30); transform: scaleX(0.9114);">External Tables</span><svg style="left:35.7px;top:125.3px" width="5.8" height="5.8" viewBox="0 0 5.8 5.8"><rect x=".4" y=".4" width="5" height="5" fill="#fff" stroke="#a4a9b8" stroke-width=".6"></rect><path d="M1.500 2.900h2.800" stroke="#5b6577" stroke-width=".7"></path><path d="M2.900 1.500v2.800" stroke="#4b5567" stroke-width=".7"></path></svg><svg style="left:43.5px;top:125px" width="6.4" height="5.4" viewBox="0 0 6.4 5.4"><path d="M0 .9h2.400l.7.800h3.300v3.700H0z" fill="#dcb67a"></path></svg><span class="tr" style="left: 52.58px; top: 122.85px; font-size: 8px; line-height: 10px; color: rgb(30, 30, 30); transform: scaleX(0.9364);">Graph Tables</span><svg style="left:35.7px;top:137.45px" width="5.8" height="5.8" viewBox="0 0 5.8 5.8"><rect x=".4" y=".4" width="5" height="5" fill="#fff" stroke="#a4a9b8" stroke-width=".6"></rect><path d="M1.500 2.900h2.800" stroke="#5b6577" stroke-width=".7"></path><path d="M2.900 1.500v2.800" stroke="#4b5567" stroke-width=".7"></path></svg><svg style="left:43.5px;top:137.65px" width="6.4" height="5.6" viewBox="0 0 6.4 5.6"><path d="M.2.200h6v5.200H.2z" fill="#fff" stroke="#333" stroke-width=".5"></path><path d="M.2.200h6v1.600H.2z" fill="#333"></path><path d="M2.200 1.800v3.600M4.200 1.800v3.600M.2 3.600h6" stroke="#333" stroke-width=".5"></path></svg><span class="tr" style="left: 52.58px; top: 135px; font-size: 8px; line-height: 10px; color: rgb(30, 30, 30); transform: scaleX(0.9705);">dbo.DMKhoa</span><svg style="left:35.7px;top:149.6px" width="5.8" height="5.8" viewBox="0 0 5.8 5.8"><rect x=".4" y=".4" width="5" height="5" fill="#fff" stroke="#a4a9b8" stroke-width=".6"></rect><path d="M1.500 2.900h2.800" stroke="#5b6577" stroke-width=".7"></path><path d="M2.900 1.500v2.800" stroke="#4b5567" stroke-width=".7"></path></svg><svg style="left:43.5px;top:149.8px" width="6.4" height="5.6" viewBox="0 0 6.4 5.6"><path d="M.2.200h6v5.200H.2z" fill="#fff" stroke="#333" stroke-width=".5"></path><path d="M.2.200h6v1.600H.2z" fill="#333"></path><path d="M2.200 1.800v3.600M4.200 1.800v3.600M.2 3.600h6" stroke="#333" stroke-width=".5"></path></svg><span class="tr" style="left: 52.58px; top: 147.15px; font-size: 8px; line-height: 10px; color: rgb(30, 30, 30); transform: scaleX(1.0055);">dbo.DMMonHoc</span><svg style="left:35.7px;top:161.75px" width="5.8" height="5.8" viewBox="0 0 5.8 5.8"><rect x=".4" y=".4" width="5" height="5" fill="#fff" stroke="#a4a9b8" stroke-width=".6"></rect><path d="M1.500 2.900h2.800" stroke="#5b6577" stroke-width=".7"></path><path d="M2.900 1.500v2.800" stroke="#4b5567" stroke-width=".7"></path></svg><svg style="left:43.5px;top:161.95px" width="6.4" height="5.6" viewBox="0 0 6.4 5.6"><path d="M.2.200h6v5.200H.2z" fill="#fff" stroke="#333" stroke-width=".5"></path><path d="M.2.200h6v1.600H.2z" fill="#333"></path><path d="M2.200 1.800v3.600M4.200 1.800v3.600M.2 3.600h6" stroke="#333" stroke-width=".5"></path></svg><span class="tr" style="left: 52.58px; top: 159.3px; font-size: 8px; line-height: 10px; color: rgb(30, 30, 30); transform: scaleX(0.9395);">dbo.DSSinhVien</span><svg style="left:35.7px;top:173.9px" width="5.8" height="5.8" viewBox="0 0 5.8 5.8"><rect x=".4" y=".4" width="5" height="5" fill="#fff" stroke="#a4a9b8" stroke-width=".6"></rect><path d="M1.500 2.900h2.800" stroke="#5b6577" stroke-width=".7"></path><path d="M2.900 1.500v2.800" stroke="#4b5567" stroke-width=".7"></path></svg><svg style="left:43.5px;top:174.1px" width="6.4" height="5.6" viewBox="0 0 6.4 5.6"><path d="M.2.200h6v5.200H.2z" fill="#fff" stroke="#333" stroke-width=".5"></path><path d="M.2.200h6v1.600H.2z" fill="#333"></path><path d="M2.200 1.800v3.600M4.200 1.800v3.600M.2 3.600h6" stroke="#333" stroke-width=".5"></path></svg><span class="tr" style="left: 52.58px; top: 171.45px; font-size: 8px; line-height: 10px; color: rgb(30, 30, 30); transform: scaleX(0.921);">dbo.DSSV_Nu</span><svg style="left:35.7px;top:186.05px" width="5.8" height="5.8" viewBox="0 0 5.8 5.8"><rect x=".4" y=".4" width="5" height="5" fill="#fff" stroke="#a4a9b8" stroke-width=".6"></rect><path d="M1.500 2.900h2.800" stroke="#5b6577" stroke-width=".7"></path></svg><svg style="left:43.5px;top:186.25px" width="6.4" height="5.6" viewBox="0 0 6.4 5.6"><path d="M.2.200h6v5.200H.2z" fill="#fff" stroke="#333" stroke-width=".5"></path><path d="M.2.200h6v1.600H.2z" fill="#333"></path><path d="M2.200 1.800v3.600M4.200 1.800v3.600M.2 3.600h6" stroke="#333" stroke-width=".5"></path></svg><span class="tr" style="left: 52.58px; top: 183.6px; font-size: 8px; line-height: 10px; color: rgb(30, 30, 30); transform: scaleX(0.9513);">dbo.KetQua</span><svg style="left:43.85px;top:198.2px" width="5.8" height="5.8" viewBox="0 0 5.8 5.8"><rect x=".4" y=".4" width="5" height="5" fill="#fff" stroke="#a4a9b8" stroke-width=".6"></rect><path d="M1.500 2.900h2.800" stroke="#5b6577" stroke-width=".7"></path></svg><svg style="left:51.65px;top:197.9px" width="6.4" height="5.4" viewBox="0 0 6.4 5.4"><path d="M0 .9h2.400l.7.800h3.300v3.700H0z" fill="#dcb67a"></path></svg><span class="tr" style="left: 60.7px; top: 195.75px; font-size: 8px; line-height: 10px; color: rgb(30, 30, 30); transform: scaleX(0.963);">Columns</span><svg style="left:60.5px;top:211.65px" width="6.2" height="3.4" viewBox="0 0 6.2 3.4"><circle cx="4.700" cy="1.700" r="1.200" fill="none" stroke="#222" stroke-width=".8"></circle><path d="M0 1.700h3.500" stroke="#222" stroke-width=".9"></path></svg><span class="tr" style="left: 68.82px; top: 207.9px; font-size: 8px; line-height: 10px; color: rgb(30, 30, 30); transform: scaleX(0.8922);">MaSV (PK, FK, char(3), no</span><svg style="left:60.5px;top:223.8px" width="6.2" height="3.4" viewBox="0 0 6.2 3.4"><circle cx="4.700" cy="1.700" r="1.200" fill="none" stroke="#222" stroke-width=".8"></circle><path d="M0 1.700h3.500" stroke="#222" stroke-width=".9"></path></svg><span class="tr" style="left: 68.82px; top: 220.05px; font-size: 8px; line-height: 10px; color: rgb(30, 30, 30); transform: scaleX(0.8996);">MaMH (PK, FK, char(2), no</span><svg style="left:60.5px;top:235.95px" width="6.2" height="3.4" viewBox="0 0 6.2 3.4"><circle cx="4.700" cy="1.700" r="1.200" fill="none" stroke="#222" stroke-width=".8"></circle><path d="M0 1.700h3.500" stroke="#222" stroke-width=".9"></path></svg><span class="tr" style="left: 68.82px; top: 232.2px; font-size: 8px; line-height: 10px; color: rgb(30, 30, 30); transform: scaleX(0.9297);">LanThi (PK, tinyint, not nu</span><svg style="left:61.3px;top:246.7px" width="3.4" height="6.2" viewBox="0 0 3.4 6.2"><path d="M.4.400h2.600v5.400H.4z" fill="#fff" stroke="#333" stroke-width=".6"></path><path d="M.4 2.200h2.600M.4 4h2.600" stroke="#333" stroke-width=".5"></path></svg><span class="tr" style="left: 68.82px; top: 244.35px; font-size: 8px; line-height: 10px; color: rgb(30, 30, 30); transform: scaleX(0.9351);">Diem (decimal(4,2), null)</span><svg style="left:61.3px;top:258.85px" width="3.4" height="6.2" viewBox="0 0 3.4 6.2"><path d="M.4.400h2.600v5.400H.4z" fill="#fff" stroke="#333" stroke-width=".6"></path><path d="M.4 2.200h2.600M.4 4h2.600" stroke="#333" stroke-width=".5"></path></svg><span class="tr" style="left: 68.82px; top: 256.5px; font-size: 8px; line-height: 10px; color: rgb(30, 30, 30); transform: scaleX(0.9391);">TinhTrang (int, null)</span><svg style="left:43.85px;top:271.1px" width="5.8" height="5.8" viewBox="0 0 5.8 5.8"><rect x=".4" y=".4" width="5" height="5" fill="#fff" stroke="#a4a9b8" stroke-width=".6"></rect><path d="M1.500 2.900h2.800" stroke="#5b6577" stroke-width=".7"></path><path d="M2.900 1.500v2.800" stroke="#4b5567" stroke-width=".7"></path></svg><svg style="left:51.65px;top:270.8px" width="6.4" height="5.4" viewBox="0 0 6.4 5.4"><path d="M0 .9h2.400l.7.800h3.300v3.700H0z" fill="#dcb67a"></path></svg><span class="tr" style="left: 60.7px; top: 268.65px; font-size: 8px; line-height: 10px; color: rgb(30, 30, 30); transform: scaleX(0.8771);">Keys</span><svg style="left:43.85px;top:283.25px" width="5.8" height="5.8" viewBox="0 0 5.8 5.8"><rect x=".4" y=".4" width="5" height="5" fill="#fff" stroke="#a4a9b8" stroke-width=".6"></rect><path d="M1.500 2.900h2.800" stroke="#5b6577" stroke-width=".7"></path><path d="M2.900 1.500v2.800" stroke="#4b5567" stroke-width=".7"></path></svg><svg style="left:51.65px;top:282.95px" width="6.4" height="5.4" viewBox="0 0 6.4 5.4"><path d="M0 .9h2.400l.7.800h3.300v3.700H0z" fill="#dcb67a"></path></svg><span class="tr" style="left: 60.7px; top: 280.8px; font-size: 8px; line-height: 10px; color: rgb(30, 30, 30); transform: scaleX(0.9515);">Constraints</span><svg style="left:43.85px;top:295.4px" width="5.8" height="5.8" viewBox="0 0 5.8 5.8"><rect x=".4" y=".4" width="5" height="5" fill="#fff" stroke="#a4a9b8" stroke-width=".6"></rect><path d="M1.500 2.900h2.800" stroke="#5b6577" stroke-width=".7"></path><path d="M2.900 1.500v2.800" stroke="#4b5567" stroke-width=".7"></path></svg><svg style="left:51.65px;top:295.1px" width="6.4" height="5.4" viewBox="0 0 6.4 5.4"><path d="M0 .9h2.400l.7.800h3.300v3.700H0z" fill="#dcb67a"></path></svg><span class="tr" style="left: 60.7px; top: 292.95px; font-size: 8px; line-height: 10px; color: rgb(30, 30, 30); transform: scaleX(0.9538);">Triggers</span></div><div style="left:155.6px;top:107.5px;width:12.2px;height:300.9px;background:#e8e8ec;"></div><svg style="left:158.9px;top:112.4px" width="5.6" height="3.4" viewBox="0 0 5.6 3.4"><path d="M.4 3L2.800.6 5.200 3" fill="none" stroke="#3b3f4a" stroke-width=".9"></path></svg><div style="left:156.2px;top:119.7px;width:11px;height:166px;background:#c2c3c9;"></div><svg style="left:158.9px;top:401px" width="5.6" height="3.4" viewBox="0 0 5.6 3.4"><path d="M.4.4l2.400 2.400L5.200.4" fill="none" stroke="#3b3f4a" stroke-width=".9"></path></svg><div style="left:4.8px;top:408.4px;width:163px;height:11.3px;background:#e8e8ec;"></div><div style="left:17.1px;top:409.1px;width:55.4px;height:9.8px;background:#c2c3c9;"></div><svg style="left:9.5px;top:411.1px" width="3.4" height="5.6" viewBox="0 0 3.4 5.6"><path d="M3 .4L.6 2.800 3 5.200" fill="none" stroke="#3b3f4a" stroke-width=".9"></path></svg><svg style="left:146.9px;top:411.1px" width="3.4" height="5.6" viewBox="0 0 3.4 5.6"><path d="M.4.4l2.400 2.400L.4 5.200" fill="none" stroke="#3b3f4a" stroke-width=".9"></path></svg><div style="left:172.2px;top:88.1px;width:653.5px;height:332px;background:#ececf0;"></div><div style="left:345.1px;top:74.4px;width:353.4px;height:13.5px;background:#364e6f;"></div><div style="left:172px;top:74.3px;width:173.1px;height:14.8px;background:#fff29d;"></div><span style="left: 174.2px; top: 76.05px; font-size: 7.7px; line-height: 10px; color: rgb(30, 30, 30); transform: scaleX(0.9794);">Thanh221230991.sql...irai Kuriyama (52))*</span><svg style="left:323.8px;top:79.2px" width="6.4" height="4.6" viewBox="0 0 6.4 4.6"><path d="M0 2.300h2.200M2.200.5v3.600M2.200 1.200h3v2.200h-3" fill="none" stroke="#4b4b3a" stroke-width=".7"></path></svg><svg style="left:335.6px;top:78.4px" width="5.8" height="5.8" viewBox="0 0 5.8 5.8"><path d="M.4.4l5 5M5.400.4l-5 5" stroke="#2b2b2b" stroke-width=".9"></path></svg><span style="left: 349.6px; top: 76.25px; font-size: 7.7px; line-height: 10px; color: rgb(255, 255, 255); transform: scaleX(0.9459);">DESKTOP-E01FDDP\...hVien - Diagram_0*</span><span style="left: 525.7px; top: 76.25px; font-size: 7.7px; line-height: 10px; color: rgb(255, 255, 255); transform: scaleX(0.9436);">BT2_QLSinhVien.sql...Mirai Kuriyama (69))*</span><svg style="left:819.1px;top:81.35px" width="4.4" height="2.3" viewBox="0 0 4.4 2.3"><path d="M0 0H4.4L2.2 2.3Z" fill="#ffffff"></path></svg><div style="left:172px;top:87.8px;width:653.9px;height:1.3px;background:#fff29d;"></div><div class="clip" style="left:172px;top:89.1px;width:641.4px;height:153.5px;background:#fff"><div style="left:0px;top:0px;width:12.5px;height:153.5px;background:#e6e7e8;"></div><div style="left:13px;top:0px;width:3.7px;height:153.5px;background:#ffee62;"></div><div style="left:21.1px;top:-0.6px;width:0.6px;height:11.04px;background:#cdcdcd;"></div><div style="left:21.1px;top:19.04px;width:0.6px;height:63.68px;background:#cdcdcd;"></div><div style="left:21.1px;top:107.36px;width:0.6px;height:8.48px;background:#cdcdcd;"></div><div style="left:21.1px;top:140.48px;width:0.6px;height:8.48px;background:#cdcdcd;"></div><div style="left:25px;top:98.76px;width:110.05px;height:11.04px;background:#9bc8ee;"></div><div style="left:25px;top:109.8px;width:252.55px;height:11.04px;background:#9bc8ee;"></div><svg style="left:18px;top:13.44px" width="5.8" height="5.8" viewBox="0 0 5.8 5.8"><rect x=".4" y=".4" width="5" height="5" fill="#fff" stroke="#a8a8a8" stroke-width=".6"></rect><path d="M1.500 2.900h2.800" stroke="#555" stroke-width=".7"></path></svg><svg style="left:18px;top:101.76px" width="5.8" height="5.8" viewBox="0 0 5.8 5.8"><rect x=".4" y=".4" width="5" height="5" fill="#fff" stroke="#a8a8a8" stroke-width=".6"></rect><path d="M1.500 2.900h2.800" stroke="#555" stroke-width=".7"></path></svg><svg style="left:18px;top:134.88px" width="5.8" height="5.8" viewBox="0 0 5.8 5.8"><rect x=".4" y=".4" width="5" height="5" fill="#fff" stroke="#a8a8a8" stroke-width=".6"></rect><path d="M1.500 2.900h2.800" stroke="#555" stroke-width=".7"></path></svg><pre class="cl" style="left:25.8px;top:-0.6px"><i class="c">--5.5 ghi 1, còn lại không ghi (null)</i></pre><pre class="cl" style="left:25.8px;top:10.44px"><i class="m">UPDATE</i> KetQua</pre><pre class="cl" style="left:25.8px;top:21.48px"><i class="k">SET</i> TinhTrang <i class="g">=</i></pre><pre class="cl" style="left:25.8px;top:32.52px">    <i class="k">CASE</i></pre><pre class="cl" style="left:25.8px;top:43.56px">        <i class="k">WHEN</i> <i class="m">COALESCE</i><i class="g">((</i><i class="k">SELECT</i> <i class="m">AVG</i><i class="g">(</i>Diem<i class="g">)</i> <i class="k">FROM</i> KetQua kq <i class="k">WHERE</i> kq<i class="g">.</i>MaSV <i class="g">=</i> KetQua<i class="g">.</i>MaSV<i class="g">),</i> 0<i class="g">)</i> <i class="g">&lt;</i> 4 <i class="k">THEN</i> 0</pre><pre class="cl" style="left:25.8px;top:54.6px">        <i class="k">WHEN</i> <i class="m">COALESCE</i><i class="g">((</i><i class="k">SELECT</i> <i class="m">AVG</i><i class="g">(</i>Diem<i class="g">)</i> <i class="k">FROM</i> KetQua kq <i class="k">WHERE</i> kq<i class="g">.</i>MaSV <i class="g">=</i> KetQua<i class="g">.</i>MaSV<i class="g">),</i> 0<i class="g">)</i> <i class="g">&gt;=</i> 4 <i class="g">AND</i> <i class="m">COALESCE</i><i class="g">((</i><i class="k">SELECT</i> <i class="m">AVG</i><i class="g">(</i>Diem<i class="g">)</i> <i class="k">FROM</i> KetQua kq</pre><pre class="cl" style="left:25.8px;top:65.64px">        <i class="k">ELSE</i> <i class="g">NULL</i></pre><pre class="cl" style="left:25.8px;top:76.68px">    <i class="k">END</i><i class="g">;</i></pre><pre class="cl" style="left:25.8px;top:87.72px"><i class="c">--25.Xoá tất cả những sinh viên chưa dự thi môn nào</i></pre><pre class="cl" style="left:25.8px;top:98.76px"><i class="k">DELETE</i> <i class="k">FROM</i> DSSinhVien</pre><pre class="cl" style="left:25.8px;top:109.8px"><i class="k">WHERE</i> MaSV <i class="g">NOT</i> <i class="g">IN</i> <i class="g">(</i><i class="k">SELECT</i> <i class="k">DISTINCT</i> MaSV <i class="k">FROM</i> KetQua<i class="g">);</i></pre><pre class="cl" style="left:25.8px;top:120.84px"><i class="c">--26.Xóa những môn mà không có sinh viên học</i></pre><pre class="cl" style="left:25.8px;top:131.88px"><i class="k">DELETE</i> <i class="k">FROM</i> DMMonHoc</pre><pre class="cl" style="left:25.8px;top:142.92px"><i class="k">WHERE</i> MaMH <i class="g">NOT</i> <i class="g">IN</i> <i class="g">(</i><i class="k">SELECT</i> <i class="k">DISTINCT</i> MaMH <i class="k">FROM</i> KetQua<i class="g">);</i></pre><svg style="left:44.8px;top:30.78px" width="42.75" height="2.4"><path d="M0 0.3L1.5 2.1L3 0.3L4.5 2.1L6 0.3L7.5 2.1L9 0.3L10.5 2.1L12 0.3L13.5 2.1L15 0.3L16.5 2.1L18 0.3L19.5 2.1L21 0.3L22.5 2.1L24 0.3L25.5 2.1L27 0.3L28.5 2.1L30 0.3L31.5 2.1L33 0.3L34.5 2.1L36 0.3L37.5 2.1L39 0.3L40.5 2.1L42 0.3" fill="none" stroke="#e8362c" stroke-width=".75" stroke-linejoin="round"></path></svg></div><div style="left:813.4px;top:89.1px;width:12.5px;height:165.2px;background:#e8e8ec;"></div><div style="left:813.4px;top:89.1px;width:12.2px;height:10.2px;background:#f2f4fa;box-sizing:border-box;border:.5px solid #aeb4c4"></div><svg style="left:816px;top:90.2px" width="7" height="8" viewBox="0 0 7 8"><path d="M3.500.6v6.800M.8 4h5.400" stroke="#1e1e1e" stroke-width=".9"></path><path d="M3.500 0l1.400 1.600H2.100zM3.500 8L2.100 6.400h2.800z" fill="#1e1e1e"></path></svg><svg style="left:816.9px;top:104px" width="5.4" height="3" viewBox="0 0 5.4 3"><path d="M0 3L2.700 0l2.700 3z" fill="#868999"></path></svg><svg style="left:816.9px;top:235.8px" width="5.4" height="3" viewBox="0 0 5.4 3"><path d="M0 0h5.400L2.700 3z" fill="#868999"></path></svg><div style="left:814.2px;top:110.9px;width:2.8px;height:7.9px;background:#6cd66c;"></div><div style="left:814.2px;top:118.8px;width:2.8px;height:104.8px;background:#ffe95a;"></div><div style="left:814.2px;top:223.6px;width:2.8px;height:2.4px;background:#6cd66c;"></div><div style="left:817px;top:180.7px;width:4.5px;height:2.8px;background:#c6c7cd;"></div><div style="left:821.7px;top:180px;width:3.6px;height:3.6px;background:#f00014;"></div><div style="left:821.7px;top:187.2px;width:3.6px;height:3.7px;background:#f00014;"></div><div style="left:813px;top:184.6px;width:12.6px;height:1.4px;background:#1414b4;"></div><div style="left:172px;top:242.6px;width:641.4px;height:11.7px;background:#e8e8ec;"></div><div style="left:172px;top:242.6px;width:39.2px;height:11.2px;background:#fdfdff;box-sizing:border-box;border:.5px solid #c8ccd8"></div><span style="left: 174.4px; top: 243.35px; font-size: 7.5px; line-height: 10px; color: rgb(30, 30, 30); transform: scaleX(0.9591);">100 %</span><svg style="left:206.4px;top:248.05px" width="3" height="1.7" viewBox="0 0 3 1.7"><path d="M0 0H3L1.5 1.7Z" fill="#1e1e1e"></path></svg><svg style="left:216px;top:245.7px" width="3.2" height="5.4" viewBox="0 0 3.2 5.4"><path d="M3.200 0v5.400L0 2.700z" fill="#868999"></path></svg><div style="left:222.5px;top:245.2px;width:353px;height:6.3px;background:#c2c3c9;"></div><svg style="left:805.8px;top:245.7px" width="3.2" height="5.4" viewBox="0 0 3.2 5.4"><path d="M0 0v5.400l3.200-2.700z" fill="#868999"></path></svg><div style="left:172px;top:254.3px;width:653.9px;height:14.2px;background:#eeeef2;"></div><div style="left:172px;top:256.1px;width:48px;height:12.4px;background:#f7f7fa;box-sizing:border-box;border:.5px solid #d5d7df;border-bottom:0"></div><svg style="left:175.7px;top:258.7px" width="6.4" height="6" viewBox="0 0 6.4 6"><path d="M.3 2.400h3v3.300h-3z" fill="#eee" stroke="#444" stroke-width=".6"></path><path d="M3.400.4h2.700v4h-2.700z" fill="#777" stroke="#333" stroke-width=".5"></path></svg><span style="left: 185.9px; top: 256.35px; font-size: 7.6px; line-height: 10px; color: rgb(30, 30, 30); transform: scaleX(0.901);">Messages</span><div style="left:172px;top:268.5px;width:640.6px;height:125.9px;background:#ffffff;"></div><pre class="ms" style="left: 189.3px; top: 278.8px; letter-spacing: -0.114px;">(0 rows affected)</pre><pre class="ms" style="left: 188.1px; top: 298.9px; letter-spacing: 0.001px;">Completion time: 2024-03-07T01:05:03.4221292+07:00</pre><div style="left:812.6px;top:268.5px;width:13.3px;height:125.9px;background:#e8e8ec;"></div><svg style="left:816.6px;top:273px" width="5.4" height="3" viewBox="0 0 5.4 3"><path d="M0 3L2.700 0l2.700 3z" fill="#868999"></path></svg><div style="left:815.3px;top:280.1px;width:5.6px;height:72.7px;background:#c2c3c9;"></div><svg style="left:816.6px;top:386.7px" width="5.4" height="3" viewBox="0 0 5.4 3"><path d="M0 0h5.400L2.700 3z" fill="#868999"></path></svg><div style="left:172px;top:394.4px;width:653.9px;height:13.1px;background:#e8e8ec;"></div><div style="left:172px;top:394.9px;width:41.6px;height:11.6px;background:#fdfdff;box-sizing:border-box;border:.5px solid #c8ccd8"></div><span style="left: 174.6px; top: 395.45px; font-size: 7.5px; line-height: 10px; color: rgb(30, 30, 30); transform: scaleX(0.9591);">100 %</span><svg style="left:207.9px;top:400.25px" width="3" height="1.7" viewBox="0 0 3 1.7"><path d="M0 0H3L1.5 1.7Z" fill="#1e1e1e"></path></svg><svg style="left:216.6px;top:398px" width="3.2" height="5.4" viewBox="0 0 3.2 5.4"><path d="M3.200 0v5.400L0 2.700z" fill="#cfd0d8"></path></svg><svg style="left:805px;top:398px" width="3.2" height="5.4" viewBox="0 0 3.2 5.4"><path d="M0 0v5.400l3.200-2.700z" fill="#cfd0d8"></path></svg><div style="left:172px;top:407.5px;width:653.9px;height:12.9px;background:#f0e68c;"></div><svg style="left:174.8px;top:411px" width="6.4" height="6.4" viewBox="0 0 6.4 6.4"><circle cx="3.200" cy="3.200" r="3.100" fill="#2e9b3c"></circle><path d="M1.600 3.300l1.200 1.200 2.100-2.400" fill="none" stroke="#fff" stroke-width=".9"></path></svg><span style="left: 183.7px; top: 408.95px; font-size: 7.9px; line-height: 10px; color: rgb(30, 30, 30); transform: scaleX(0.9438);">Query executed successfully.</span><div style="left:471.7px;top:408.7px;width:0.6px;height:10.6px;background:#d9cf7a;"></div><div style="left:600.2px;top:408.7px;width:0.6px;height:10.6px;background:#d9cf7a;"></div><div style="left:702.7px;top:408.7px;width:0.6px;height:10.6px;background:#d9cf7a;"></div><div style="left:749.4px;top:408.7px;width:0.6px;height:10.6px;background:#d9cf7a;"></div><div style="left:786.7px;top:408.7px;width:0.6px;height:10.6px;background:#d9cf7a;"></div><span style="left: 475.7px; top: 409.05px; font-size: 7.9px; line-height: 10px; color: rgb(30, 30, 30); transform: scaleX(0.8665);">DESKTOP-E01FDDP\SQLEXPRESS ...</span><span style="left: 604.8px; top: 409.05px; font-size: 7.9px; line-height: 10px; color: rgb(30, 30, 30); transform: scaleX(0.903);">DESKTOP-E01FDDP\Mirai ...</span><span style="left: 706.5px; top: 409.05px; font-size: 7.9px; line-height: 10px; color: rgb(30, 30, 30); transform: scaleX(0.9212);">QLSinhVien</span><span style="left: 753.6px; top: 409.05px; font-size: 7.9px; line-height: 10px; color: rgb(30, 30, 30); transform: scaleX(0.9335);">00:00:00</span><span style="left: 790.9px; top: 409.05px; font-size: 7.9px; line-height: 10px; color: rgb(30, 30, 30); transform: scaleX(0.9499);">0 rows</span><div style="left:0px;top:425.2px;width:829.3px;height:15.9px;background:#007acc;"></div><svg style="left:2.9px;top:430.2px" width="9.6" height="7" viewBox="0 0 9.6 7"><path d="M2 .6h7l-1.400 5.800H.6z" fill="none" stroke="#fff" stroke-width=".8"></path></svg><span style="left: 18.7px; top: 428.35px; font-size: 7.9px; line-height: 10px; color: rgb(255, 255, 255); transform: scaleX(0.8847);">Ready</span><span style="left: 337.7px; top: 428.35px; font-size: 7.9px; line-height: 10px; color: rgb(255, 255, 255); transform: scaleX(0.9106);">Ln 145</span><span style="left: 397px; top: 428.35px; font-size: 7.9px; line-height: 10px; color: rgb(255, 255, 255); transform: scaleX(0.9598);">Col 1</span><span style="left: 456.6px; top: 428.35px; font-size: 7.9px; line-height: 10px; color: rgb(255, 255, 255); transform: scaleX(0.9109);">Ch 1</span><span style="left: 545.3px; top: 428.35px; font-size: 7.9px; line-height: 10px; color: rgb(255, 255, 255); transform: scaleX(0.9037);">INS</span><div style="left:0px;top:441.1px;width:829.3px;height:25.5px;background:#222b2f;"></div><div style="left:0px;top:441.1px;width:31.2px;height:25.5px;background:#1b2a30;"></div><svg style="left:11px;top:449.4px" width="9.6" height="9.6" viewBox="0 0 9.6 9.6"><path d="M0 1.300l4-.55v3.800H0zM4.600.65L9.600 0v4.550h-5zM0 5.100h4v3.800l-4-.55zM4.600 5.100h5V9.600l-5-.7z" fill="#fff"></path></svg><div style="left:31.2px;top:441.5px;width:134.9px;height:25.1px;background:#f3f3f3;"></div><div style="left:31.2px;top:465.7px;width:134.9px;height:0.9px;background:#bdbdbd;"></div><svg style="left:40.4px;top:449.6px" width="9" height="9" viewBox="0 0 9 9"><circle cx="5.600" cy="3.400" r="2.700" fill="none" stroke="#1e1e1e" stroke-width=".8"></circle><path d="M3.700 5.300L.6 8.400" stroke="#1e1e1e" stroke-width=".9"></path></svg><span style="left: 57.8px; top: 448.65px; font-size: 9.3px; line-height: 12px; color: rgb(30, 30, 30); transform: scaleX(1.0335);">Tìm kiếm</span><svg style="left:166.1px;top:441.2px;overflow:hidden" width="52.300" height="25.600" viewBox="0 0 52.300 25.600" preserveAspectRatio="none">
<rect width="52.300" height="25.600" fill="#6c82ae"></rect>
<path d="M0 0h4L0 5z" fill="#93c44c"></path>
<path d="M8 0h3l5 4.500-2 1.500z" fill="#7fb440"></path>
<path d="M43 0h9.300v7z" fill="#a6cb58"></path>
<ellipse cx="1.500" cy="15.500" rx="7" ry="10" fill="none" stroke="#8299c6" stroke-width="2.200"></ellipse>
<ellipse cx="1" cy="15.500" rx="5.500" ry="8.500" fill="#8bc53f" stroke="#3f5330" stroke-width=".4"></ellipse>
<circle cx="49.500" cy="14.500" r="10.800" fill="none" stroke="#8ea6d0" stroke-width="2.600"></circle>
<circle cx="49.800" cy="14.500" r="8.600" fill="#9cc544"></circle>
<circle cx="17.500" cy="13.500" r="8" fill="none" stroke="#9db3da" stroke-width="5.400"></circle>
<circle cx="36" cy="19" r="7.500" fill="none" stroke="#91a8d2" stroke-width="4.400"></circle>
<path d="M7 28L38-2.500" stroke="#c6d3ee" stroke-width="7"></path>
<path d="M21.500 28L52-2.500" stroke="#bdcbe9" stroke-width="6.600"></path>
<path d="M14.500 27.500L45-2.500" stroke="#6fa83a" stroke-width="1.700" stroke-dasharray="3 3.200"></path>
<path d="M14 28L44.500-2.500" stroke="#61749c" stroke-width=".7" opacity=".6"></path>
<rect x="16.400" y="2.300" width="4.200" height="2.600" rx=".9" fill="#2468e0" transform="rotate(-32 18.500 3.600)"></rect>
<rect x="38.800" y="2.300" width="4.200" height="2.600" rx=".9" fill="#2468e0" transform="rotate(-45 40.900 3.600)"></rect>
<rect x="23.400" y="8.700" width="4.200" height="2.600" rx=".9" fill="#f0c430" transform="rotate(-40 25.500 10)"></rect>
<rect x="30" y="8.900" width="4.200" height="2.600" rx=".9" fill="#2468e0" transform="rotate(-45 32.100 10.200)"></rect>
<rect x="14.800" y="14.200" width="4.200" height="2.600" rx=".9" fill="#d63a3a" transform="rotate(-45 16.900 15.500)"></rect>
<rect x="25.800" y="15.400" width="4.200" height="2.600" rx=".9" fill="#d63a3a" transform="rotate(-45 27.900 16.700)"></rect>
<rect x="10" y="21.400" width="4.200" height="2.600" rx=".9" fill="#2468e0" transform="rotate(-35 12.100 22.700)"></rect>
<rect x="32.400" y="20.800" width="4.200" height="2.600" rx=".9" fill="#e8cf3c" transform="rotate(-55 34.500 22.100)"></rect>
</svg><svg style="left:228px;top:449.4px" width="11" height="9.4" viewBox="0 0 11 9.4"><path d="M1.500.8C3 1.800 6 1.800 7.500.8M1.500 8.600C3 7.600 6 7.600 7.500 8.600" fill="none" stroke="#e8e8e8" stroke-width=".9"></path><rect x="1.900" y="2.800" width="5.200" height="3.800" fill="none" stroke="#e8e8e8" stroke-width=".9"></rect><path d="M.5 1.500v6.400M9.800 1.200v1M9.800 3.400v4.800" stroke="#e8e8e8" stroke-width=".9"></path></svg><svg style="left:259.8px;top:447.9px" width="14.4" height="12" viewBox="0 0 14.4 12"><path d="M.4 1.200h5l1 1.400h7.600v1.600H.4z" fill="#e9a92c"></path><path d="M.4 3h13.600v8.400H.4z" fill="#fbd04f"></path><path d="M2.400 6.200h9.600v5.200H2.400z" fill="#3d8fdc"></path><path d="M4.800 8h4.800v3.400H4.800z" fill="#fbd04f"></path><path d="M.4 10.800h13.600v.8H.4z" fill="#d99a1e"></path></svg><svg style="left:291.3px;top:446px" width="16.2" height="16.2" viewBox="0 0 15.4 15.4"><defs><linearGradient id="eg" x1="0" y1="0" x2="1" y2="1"><stop offset="0" stop-color="#2f8fe0"></stop><stop offset=".55" stop-color="#1fb3c8"></stop><stop offset="1" stop-color="#53c44a"></stop></linearGradient></defs><circle cx="7.700" cy="7.700" r="7.500" fill="url(#eg)"></circle><path d="M.4 9.400C.6 4.600 5.400 2.800 9 4.400c2 1 2.600 3 1.400 4.200-.9.700-3.300.5-3.300-.9 0-1.600-2.100-2.100-3.300-.6C2.200 9 3.400 14 8.400 14.900 3.800 15.600.2 12.800.4 9.400z" fill="#0c59a4"></path><path d="M7.100 7.700c0 2.200 2.700 3.200 5 2.300 1.200-.6.800.4.200 1.400-1.700 2.600-6 2.400-7.400-.2-.9-1.900 0-3.700 1.200-4.200.7-.2 1 .1 1 .7z" fill="#1b7fd3"></path></svg><svg style="left:324.2px;top:446.6px" width="14.8" height="14.6" viewBox="0 0 14.8 14.6"><path d="M4.400 3.400V1.600c0-.5.300-.8.800-.8h4.400c.5 0 .8.300.8.800v1.800" fill="none" stroke="#29a8e0" stroke-width="1"></path><rect x=".5" y="2.800" width="13.800" height="11.400" rx="1.800" fill="#f5f5f5"></rect><rect x="4.300" y="5.300" width="2.800" height="2.800" fill="#f25022"></rect><rect x="7.700" y="5.300" width="2.800" height="2.800" fill="#7fba00"></rect><rect x="4.300" y="8.700" width="2.800" height="2.800" fill="#00a4ef"></rect><rect x="7.700" y="8.700" width="2.800" height="2.800" fill="#ffb900"></rect></svg><svg style="left:355.8px;top:446.9px" width="16.4" height="14" viewBox="0 0 16.4 14"><path d="M.4 5.600L8.200.4l7.800 5.200z" fill="#1567c2"></path><path d="M.4 5.600h15.600v8H.4z" fill="#2d9bf0"></path><path d="M1.600 5.400h13.200L8.200 10.600z" fill="#f4f8fd"></path><path d="M.4 13.600L6.800 9l1.400 1.200L9.600 9l6.400 4.600z" fill="#1c86e3"></path></svg><svg style="left:389.4px;top:447.6px" width="14" height="13" viewBox="0 0 14 13"><path d="M3.600.6l9.800 2.200-1 6.400-9.800-2z" fill="#3aa0e8"></path><path d="M4.600 1.800l7.800 1.700-.7 4.600-7.800-1.600z" fill="#58b6f3"></path><path d="M.4 9.600l6-1.600 5.400 1.600-5.600 2.600z" fill="#e4e7ec"></path><path d="M2.600 9.800l3.600-.9 3.200.9-3.400 1.500z" fill="#8d96a5"></path></svg><svg style="left:421px;top:446.1px" width="16" height="16" viewBox="0 0 16 16"><circle cx="8" cy="8" r="7.800" fill="#e33b2e"></circle><path d="M8 8L1.240 4.100A7.800 7.800 0 0 0 8 15.800z" fill="#2ba24c"></path><path d="M8 8v7.800A7.800 7.800 0 0 0 14.760 4.100z" fill="#fbc116"></path><path d="M8 8l6.760-3.900A7.800 7.800 0 0 0 1.240 4.100z" fill="#e33b2e"></path><circle cx="8" cy="8" r="3.700" fill="#fff"></circle><circle cx="8" cy="8" r="2.900" fill="#3b7ded"></circle></svg><svg style="left:453.4px;top:446.1px" width="16.4" height="16.4" viewBox="0 0 16.4 16.4"><rect x=".4" y=".4" width="15.600" height="15.600" rx="4.600" fill="#1b63d8"></rect><path d="M2.600 1h11.200c1 0 1.800.8 1.800 1.800v8.400c0 1-.8 1.800-1.800 1.800H6.400L3.800 15v-2.200C2.600 12.400 1.400 11.600 1.400 10V2.800C1.400 1.800 1.800 1 2.600 1z" fill="#fdfdfd"></path><text x="8.400" y="9" font-family="Liberation Sans" font-weight="bold" font-size="4.600" text-anchor="middle" fill="#1b63d8">Zalo</text></svg><div style="left:478px;top:441.1px;width:32px;height:25.5px;background:#4a5054;"></div><svg style="left:486.2px;top:446.3px" width="15.6" height="15.6" viewBox="0 0 15.6 15.6">
<path d="M1 9.200v4.800h4.400" fill="none" stroke="#3bb03a" stroke-width="1.300"></path>
<path d="M10.200 1.200h4.400v4" fill="none" stroke="#3bb03a" stroke-width="1.300"></path>
<rect x="1.600" y="1.600" width="7.400" height="9" rx="1.400" fill="#fbd83c"></rect>
<ellipse cx="5.300" cy="2.200" rx="3.700" ry="1.400" fill="#f6b23a"></ellipse>
<path d="M7.400 8.200l6.200 6M13.600 8.200l-6.200 6" stroke="#e8762c" stroke-width="1.700"></path></svg><svg style="left:518.5px;top:446.2px" width="15.4" height="15.4" viewBox="0 0 15.4 15.4"><rect width="15.400" height="15.400" fill="#1f2f5c"></rect><path d="M7.200 2.600l4 2v4.600l-4 2.200-4-2.200V4.600z" fill="#3a6fd8"></path><path d="M7.200 2.600l4 2-4 2-4-2z" fill="#5b8df0"></path><path d="M5 6.400c.6-.8 1.400-.8 2 0M7.600 6.400c.6-.8 1.400-.8 2 0" fill="none" stroke="#dfe8ff" stroke-width=".5"></path><rect x="9.600" y="9.600" width="5" height="5" fill="#dbe6ff"></rect><rect x="10.800" y="10.400" width="2.600" height="1.600" fill="#3a6fd8"></rect></svg><div style="left:417.2px;top:465.1px;width:23.6px;height:1.5px;background:#85c0ee;"></div><div style="left:449.6px;top:465.1px;width:24.4px;height:1.5px;background:#85c0ee;"></div><div style="left:478px;top:465.1px;width:32px;height:1.5px;background:#85c0ee;"></div><div style="left:512.6px;top:465.1px;width:27px;height:1.5px;background:#85c0ee;"></div><svg style="left:608px;top:452.4px" width="7.4" height="4.2" viewBox="0 0 7.4 4.2"><path d="M.4 3.800L3.700.5 7 3.800" fill="none" stroke="#f0f0f0" stroke-width=".9"></path></svg><svg style="left:623.6px;top:449.3px" width="6.6" height="9.8" viewBox="0 0 6.6 9.8"><rect width="6.600" height="9.800" rx="3.300" fill="#1e7be0"></rect><path d="M1.900 3.200l2.900 3.200-1.500 1.500V1.900l1.500 1.500-2.900 3.200" fill="none" stroke="#fff" stroke-width=".7"></path></svg><svg style="left:637.9px;top:449.5px" width="9" height="9.6" viewBox="0 0 9 9.6"><rect x="1.200" y="3.200" width="5" height="3.800" rx="1" fill="none" stroke="#e8e8e8" stroke-width=".7"></rect><path d="M6.200 4.600L8.400 3.600v3L6.200 5.600" fill="none" stroke="#e8e8e8" stroke-width=".7"></path><path d="M1.800 2.400C2.800.4 5.600.4 6.400 2.400M1.200 7.800h5.200M1.200 9h5.200" fill="none" stroke="#e8e8e8" stroke-width=".7"></path></svg><svg style="left:652.9px;top:451.2px" width="11" height="6.6" viewBox="0 0 11 6.6"><rect x="2.600" y="1.300" width="7.800" height="4.400" fill="none" stroke="#e8e8e8" stroke-width=".8"></rect><path d="M1.800 2.600v1.800" stroke="#e8e8e8" stroke-width="1"></path><rect x="6.400" y="2.200" width="3.200" height="2.600" fill="#e8e8e8"></rect><path d="M.2 1.200L2.600.4l.8 1.800-1 .8z" fill="#e8e8e8"></path></svg><svg style="left:669.5px;top:450.5px" width="9" height="8.4" viewBox="0 0 9 8.4"><circle cx="1.600" cy="7" r="1" fill="#e8e8e8"></circle><path d="M.8 4.200A3.600 3.600 0 0 1 4.400 7.800M.8 2A5.800 5.800 0 0 1 6.600 7.800M.8 0A7.800 7.800 0 0 1 8.600 7.800" fill="none" stroke="#bfc3c6" stroke-width=".8"></path></svg><svg style="left:683.6px;top:450.2px" width="10.4" height="8.4" viewBox="0 0 10.4 8.4"><path d="M.5 2.900h1.900L4.800.7v7L2.400 5.500H.5z" fill="none" stroke="#e8e8e8" stroke-width=".7"></path><path d="M6.200 2.900c.8.700.8 1.900 0 2.600M7.600 1.800c1.400 1.400 1.400 3.400 0 4.800" fill="none" stroke="#c5c9cc" stroke-width=".7"></path></svg><span style="left: 702.7px; top: 443.35px; font-size: 8.1px; line-height: 10px; color: rgb(255, 255, 255); transform: scaleX(0.8732);">VIE</span><span style="left: 705px; top: 454.95px; font-size: 8.1px; line-height: 10px; color: rgb(255, 255, 255); transform: scaleX(0.7617);">TL</span><span style="left: 731.6px; top: 443.35px; font-size: 8.1px; line-height: 10px; color: rgb(255, 255, 255); transform: scaleX(0.9232);">1:05 SA</span><span style="left: 724.9px; top: 454.95px; font-size: 8.1px; line-height: 10px; color: rgb(255, 255, 255); transform: scaleX(0.9992);">07/03/2024</span><svg style="left:776.6px;top:448.5px" width="17" height="17" viewBox="0 0 17 17"><path d="M1 .6h10.400v7.900H6.200L4 10.800V8.500H1z" fill="#fff"></path><path d="M2.800 2.900h6.800M2.800 4.900h6.800" stroke="#9aa0a6" stroke-width=".7"></path><circle cx="11.300" cy="10.900" r="5.100" fill="#2a3136" stroke="#9097a0" stroke-width=".7"></circle><text x="11.300" y="13.700" font-family="Liberation Sans" font-weight="bold" font-size="7.800" text-anchor="middle" fill="#fff">5</text></svg><svg style="left:802.1px;top:447.5px" width="14.6" height="14" viewBox="0 0 14.6 14"><defs><linearGradient id="cp1" x1="0" y1="0" x2="0" y2="1"><stop offset="0" stop-color="#1a8bf0"></stop><stop offset=".5" stop-color="#2bc59a"></stop><stop offset="1" stop-color="#f4d435"></stop></linearGradient><linearGradient id="cp2" x1="0" y1="0" x2="0" y2="1"><stop offset="0" stop-color="#b14df0"></stop><stop offset="1" stop-color="#f0477c"></stop></linearGradient></defs><path d="M3.400.6h4.400c1.200 0 1.900.7 1.600 1.900L8 9.400c-.3 1.200-1 1.800-2.200 1.800H1.600C.4 11.200 0 10.400.3 9.200L1.800 2C2 1.100 2.400.6 3.400.6z" fill="url(#cp1)"></path><path d="M6.600.6h1.600c1.400 0 2.200 1 1.800 2.200l-.6 1.600H7.800z" fill="#0a35c8"></path><path d="M9 3.400h3.800c1.200 0 1.700.8 1.400 2l-1 4.200c-.3 1.200-1 1.600-2.200 1.600H7.200z" fill="url(#cp2)"></path><rect x="4.400" y="9.400" width="8.400" height="4.200" rx="1" fill="#f0c419"></rect><text x="8.600" y="12.700" font-family="Liberation Sans" font-weight="bold" font-size="3.200" text-anchor="middle" fill="#1e1e1e">PRE</text></svg><div style="left:827px;top:441.4px;width:0.6px;height:25.2px;background:#8b9399;"></div></div><div style="position:absolute;left:180px;top:822px;width:829.3px;height:3px;background:#d6dbe9"></div><div class="shot" style="left:180px;top:823.1px;height:466.5px;transform:scaleY(.9985);transform-origin:0 0"><div style="left:0px;top:69.7px;width:829.3px;height:355.5px;background:#293955;"></div><div style="left:0px;top:0px;width:829.3px;height:69.7px;background:#d6dbe9;"></div><svg style="left:8.05px;top:3.95px" width="13.1" height="12.1" viewBox="0 0 13.1 12.1">
<path d="M.6 9v2.500h3.400" fill="none" stroke="#3a9b35" stroke-width="1.200"></path>
<path d="M9.200.6h3.300v2.600" fill="none" stroke="#3a9b35" stroke-width="1.200"></path>
<path d="M1.400 1.300h7v6c0 1.500-7 1.500-7 0z" fill="#fcd93a"></path>
<ellipse cx="4.900" cy="1.400" rx="3.500" ry="1.300" fill="#f5a834"></ellipse>
<path d="M5.600 6.400l6 5M11.600 6.400l-6 5" stroke="#e8762c" stroke-width="1.500"></path>
</svg><span style="left: 29.2px; top: 5.65px; font-size: 7.5px; line-height: 10px; color: rgb(30, 30, 30); transform: scaleX(0.9805);">Thanh221230991.sql - DESKTOP-E01FDDP\SQLEXPRESS.QLSinhVien (DESKTOP-E01FDDP\Mirai Kuriyama (52))* - Microsoft SQL Server Management Studio</span><div style="left:633.7px;top:1.5px;width:128.8px;height:13.9px;background:#f7f8fc;box-sizing:border-box;border:.6px solid #b4bccf"></div><span style="left: 636.9px; top: 3.25px; font-size: 7.5px; line-height: 10px; color: rgb(109, 114, 132); transform: scaleX(0.9904);">Quick Launch (Ctrl+Q)</span><svg style="left:752.3px;top:5px" width="7" height="7" viewBox="0 0 7 7"><circle cx="4.2" cy="2.8" r="2" fill="none" stroke="#1e1e1e" stroke-width=".9"></circle><path d="M2.8 4.2L.6 6.4" stroke="#1e1e1e" stroke-width="1.1"></path></svg><div style="left:772.3px;top:10.1px;width:6px;height:1.7px;background:#1e1e1e;"></div><svg style="left:793.8px;top:4.2px" width="7" height="7" viewBox="0 0 7 7"><path d="M.5 2.5h4v4h-4z" fill="none" stroke="#1e1e1e" stroke-width="1"></path><path d="M2.2 2.2V.6h4.2v4.2H4.8" fill="none" stroke="#1e1e1e" stroke-width="1"></path></svg><svg style="left:815.7px;top:4.7px" width="6.4" height="6.4" viewBox="0 0 6.4 6.4"><path d="M.4.4l5.6 5.6M6 .4L.4 6" stroke="#1e1e1e" stroke-width="1.1"></path></svg><span style="left: 6.9px; top: 21.55px; font-size: 7.5px; line-height: 10px; color: rgb(30, 30, 30); transform: scaleX(0.9019);">File</span><span style="left: 31.6px; top: 21.55px; font-size: 7.5px; line-height: 10px; color: rgb(30, 30, 30); transform: scaleX(0.9825);">Edit</span><span style="left: 58.1px; top: 21.55px; font-size: 7.5px; line-height: 10px; color: rgb(30, 30, 30); transform: scaleX(0.9677);">View</span><span style="left: 86.8px; top: 21.55px; font-size: 7.5px; line-height: 10px; color: rgb(30, 30, 30); transform: scaleX(1.033);">Query</span><span style="left: 121.8px; top: 21.55px; font-size: 7.5px; line-height: 10px; color: rgb(30, 30, 30); transform: scaleX(0.9853);">Project</span><span style="left: 158.2px; top: 21.55px; font-size: 7.5px; line-height: 10px; color: rgb(30, 30, 30); transform: scaleX(0.9879);">Tools</span><span style="left: 189.5px; top: 21.55px; font-size: 7.5px; line-height: 10px; color: rgb(30, 30, 30); transform: scaleX(1.0684);">Window</span><span style="left: 231px; top: 21.55px; font-size: 7.5px; line-height: 10px; color: rgb(30, 30, 30); transform: scaleX(1.0307);">Help</span><div style="left:6.5px;top:36.5px;width:650px;height:15px;background:#cfd6e5;opacity:.55"></div><div style="left:6.5px;top:54.3px;width:473px;height:14.6px;background:#cfd6e5;opacity:.55"></div><div style="left:8.7px;top:37.2px;width:3.8px;height:13.6px;background:radial-gradient(circle at .45px .45px,#98a1ba .4px,transparent .6px) 0 0/1.9px 1.9px,radial-gradient(circle at 1.4px 1.4px,#98a1ba .4px,transparent .6px) 0 0/1.9px 1.9px;opacity:.75"></div><div style="left:8.7px;top:55.4px;width:3.8px;height:13.6px;background:radial-gradient(circle at .45px .45px,#98a1ba .4px,transparent .6px) 0 0/1.9px 1.9px,radial-gradient(circle at 1.4px 1.4px,#98a1ba .4px,transparent .6px) 0 0/1.9px 1.9px;opacity:.75"></div><svg style="left:16.9px;top:39.6px" width="9" height="9" viewBox="0 0 10 10"><circle cx="5" cy="5" r="4.3" fill="#0f5aa8"></circle><path d="M7.3 5H3.2M5 3L3 5l2 2" fill="none" stroke="#fff" stroke-width="1.2"></path></svg><svg style="left:31.2px;top:43.35px" width="3.4" height="1.9" viewBox="0 0 3.4 1.9"><path d="M0 0H3.4L1.7 1.9Z" fill="#1e1e1e"></path></svg><svg style="left:40.2px;top:39.6px" width="9" height="9" viewBox="0 0 10 10"><circle cx="5" cy="5" r="4.1" fill="#c3c7d1"></circle><path d="M2.8 5h4M5.2 3.2L7 5 5.2 6.8" fill="none" stroke="#e9ebf1" stroke-width="1.1"></path></svg><div style="left:53.2px;top:37.5px;width:0.8px;height:13px;background:#8d92a2;"></div><svg style="left:60.2px;top:38.9px" width="10.2" height="10.2" viewBox="0 0 10 10"><path d="M3 2.2h4.2L8.6 3.8v5H3z" fill="#f6f7fa" stroke="#3b3f4a" stroke-width=".9"></path><path d="M4.3 6.6c1.3-.2 2.4-.6 2.8-2" fill="none" stroke="#3b3f4a" stroke-width=".8"></path><circle cx="2.6" cy="2.3" r="1.5" fill="#ef8a1d"></circle></svg><svg style="left:75.3px;top:43.35px" width="3.4" height="1.9" viewBox="0 0 3.4 1.9"><path d="M0 0H3.4L1.7 1.9Z" fill="#1e1e1e"></path></svg><svg style="left:83.9px;top:38.9px" width="10.2" height="10.2" viewBox="0 0 10 10"><path d="M3.4 3.6h5.2v5H3.4z" fill="#e3e6ee" stroke="#b4b9c6" stroke-width=".8"></path><path d="M1.4 1.4h2.2v2.2H1.4z" fill="#c4c8d4"></path></svg><svg style="left:99.2px;top:43.35px" width="3.4" height="1.9" viewBox="0 0 3.4 1.9"><path d="M0 0H3.4L1.7 1.9Z" fill="#9ba0ae"></path></svg><svg style="left:107.3px;top:38.6px" width="10.4" height="10.4" viewBox="0 0 10 10"><path d="M1.6 3.600h2.600l.8.900h4.200v4.700H1.600z" fill="#e9b45c"></path><path d="M.8 9.200l1.600-3.800h7.200L8 9.200z" fill="#f3c878"></path><path d="M1.400 3.200C1.600 1.600 2.600.8 4 .8V0l1.800 1.500L4 3V2.200c-.9 0-1.400.4-1.500 1z" fill="#1d5fb4"></path></svg><svg style="left:121.8px;top:38.9px" width="10.2" height="10.2" viewBox="0 0 10 10"><path d="M1.2 1.2h6.6l1 1v6.6H1.2z" fill="#0d3e8e"></path><rect x="3" y="1.2" width="3.6" height="2.6" fill="#d6dbe9"></rect><rect x="5.2" y="1.6" width="1" height="1.8" fill="#0d3e8e"></rect></svg><svg style="left:136px;top:38.9px" width="10.2" height="10.2" viewBox="0 0 10 10"><path d="M3.6.8h5l.8.8v4.8H3.6z" fill="#0d3e8e"></path><rect x="5" y=".8" width="2.6" height="1.8" fill="#d6dbe9"></rect><path d="M.8 4h4.8l.8.8v4.6H.8z" fill="#0d3e8e" stroke="#d6dbe9" stroke-width=".5"></path><rect x="2" y="4.2" width="2.6" height="1.7" fill="#d6dbe9"></rect></svg><div style="left:150.8px;top:37.5px;width:0.8px;height:13px;background:#8d92a2;"></div><svg style="left:156.9px;top:38.9px" width="10.2" height="10.2" viewBox="0 0 10 10"><path d="M3 1.2h3.8L8.6 3v5.6H3z" fill="#eef0f5" stroke="#4a4e59" stroke-width=".9"></path><path d="M4.2 3.6h3M4.2 5h3M4.2 6.4h3" stroke="#777c8a" stroke-width=".6"></path><path d="M.6 6.2h3.2v2.2H.6z" fill="#3b3f4a"></path><circle cx="1.4" cy="8.9" r=".7" fill="#3b3f4a"></circle><circle cx="3.2" cy="8.9" r=".7" fill="#3b3f4a"></circle></svg><span style="left: 169.8px; top: 39.05px; font-size: 7.5px; line-height: 10px; color: rgb(30, 30, 30); transform: scaleX(1.0157);">New Query</span><svg style="left:215.7px;top:38.9px" width="10.2" height="10.2" viewBox="0 0 10 10"><path d="M3 1.2h3.8L8.6 3v5.6H3z" fill="#eef0f5" stroke="#4a4e59" stroke-width=".9"></path><path d="M4.2 3.6h3M4.2 5h3M4.2 6.4h3" stroke="#777c8a" stroke-width=".6"></path><path d="M.6 6.2h3.2v2.2H.6z" fill="#3b3f4a"></path><circle cx="1.4" cy="8.9" r=".7" fill="#3b3f4a"></circle><circle cx="3.2" cy="8.9" r=".7" fill="#3b3f4a"></circle></svg><svg style="left:230.5px;top:38.9px" width="10.2" height="10.2" viewBox="0 0 10 10"><path d="M5 .7L9 2.700 5 4.700 1 2.700z" fill="#eef0f5" stroke="#4a4e59" stroke-width=".8" stroke-linejoin="round"></path><path d="M1 2.700v3.300M9 2.700v3.300M5 4.700v1.500" stroke="#4a4e59" stroke-width=".8"></path><path d="M1.600 7h1.800v2.200H1.600zM4.100 7h1.800v2.200H4.100zM6.600 7h1.800v2.200H6.600z" fill="#3b3f4a"></path></svg><svg style="left:245.1px;top:38.9px" width="10.2" height="10.2" viewBox="0 0 10 10"><path d="M5 .7L9 2.700 5 4.700 1 2.700z" fill="#eef0f5" stroke="#4a4e59" stroke-width=".8" stroke-linejoin="round"></path><path d="M1 2.700v3.300M9 2.700v3.300M5 4.700v1.500" stroke="#4a4e59" stroke-width=".8"></path><path d="M1.600 7h1.800v2.200H1.600zM4.100 7h1.800v2.200H4.100zM6.600 7h1.800v2.200H6.600z" fill="#3b3f4a"></path></svg><svg style="left:259.8px;top:38.9px" width="10.2" height="10.2" viewBox="0 0 10 10"><path d="M5 .7L9 2.700 5 4.700 1 2.700z" fill="#eef0f5" stroke="#4a4e59" stroke-width=".8" stroke-linejoin="round"></path><path d="M1 2.700v3.300M9 2.700v3.300M5 4.700v1.500" stroke="#4a4e59" stroke-width=".8"></path><path d="M1.600 7h1.800v2.200H1.600zM4.100 7h1.800v2.200H4.100zM6.600 7h1.800v2.200H6.600z" fill="#3b3f4a"></path></svg><svg style="left:274.6px;top:38.9px" width="10.2" height="10.2" viewBox="0 0 10 10"><path d="M5 .7L9 2.700 5 4.700 1 2.700z" fill="#eef0f5" stroke="#4a4e59" stroke-width=".8" stroke-linejoin="round"></path><path d="M1 2.700v3.300M9 2.700v3.300M5 4.700v1.500" stroke="#4a4e59" stroke-width=".8"></path><path d="M1.600 7h1.800v2.200H1.600zM4.100 7h1.800v2.200H4.100zM6.600 7h1.800v2.200H6.600z" fill="#3b3f4a"></path></svg><div style="left:288.9px;top:37.5px;width:0.8px;height:13px;background:#8d92a2;"></div><svg style="left:294.6px;top:38.9px" width="10.2" height="10.2" viewBox="0 0 10 10"><path d="M2.6 1l3.6 5.4M7.4 1L3.8 6.4" stroke="#3b3f4a" stroke-width=".9"></path><circle cx="2.8" cy="7.6" r="1.4" fill="none" stroke="#3b3f4a" stroke-width=".9"></circle><circle cx="7.2" cy="7.6" r="1.4" fill="none" stroke="#3b3f4a" stroke-width=".9"></circle></svg><svg style="left:309.3px;top:38.9px" width="10.2" height="10.2" viewBox="0 0 10 10"><path d="M3.6 1h4.8v5.6H3.6z" fill="#eef0f5" stroke="#4a4e59" stroke-width=".8"></path><path d="M1.4 3.4h4.4V9H1.4z" fill="#eef0f5" stroke="#4a4e59" stroke-width=".8"></path></svg><svg style="left:323.6px;top:38.9px" width="10.2" height="10.2" viewBox="0 0 10 10"><path d="M1.8 3h6.4v6H1.8z" fill="#eef0f5" stroke="#4a4e59" stroke-width=".8"></path><path d="M3.6 3V1.6h2.8V3" fill="none" stroke="#4a4e59" stroke-width=".8"></path><path d="M5 4.6h3.2V9H5z" fill="#eef0f5" stroke="#4a4e59" stroke-width=".7"></path></svg><div style="left:338.4px;top:37.5px;width:0.8px;height:13px;background:#8d92a2;"></div><svg style="left:343.9px;top:38.3px" width="11" height="11" viewBox="0 0 10 10"><path d="M2.2 1.6v3.2h3.2" fill="none" stroke="#1a5db0" stroke-width="1.3"></path><path d="M2.6 4.4C4 2.4 7.4 2.4 8 5.2c.3 1.6-.8 2.8-2.6 3.6" fill="none" stroke="#1a5db0" stroke-width="1.3"></path></svg><svg style="left:359.6px;top:43.35px" width="3.4" height="1.9" viewBox="0 0 3.4 1.9"><path d="M0 0H3.4L1.7 1.9Z" fill="#1e1e1e"></path></svg><svg style="left:367.4px;top:38.3px" width="11" height="11" viewBox="0 0 10 10"><path d="M7.8 1.6v3.2H4.6" fill="none" stroke="#1a5db0" stroke-width="1.3"></path><path d="M7.4 4.4C6 2.4 2.6 2.4 2 5.2c-.3 1.6.8 2.8 2.6 3.6" fill="none" stroke="#1a5db0" stroke-width="1.3"></path></svg><svg style="left:383.1px;top:43.35px" width="3.4" height="1.9" viewBox="0 0 3.4 1.9"><path d="M0 0H3.4L1.7 1.9Z" fill="#1e1e1e"></path></svg><div style="left:389.9px;top:37.5px;width:0.8px;height:13px;background:#8d92a2;"></div><svg style="left:396.6px;top:38.9px" width="10.2" height="10.2" viewBox="0 0 10 10"><path d="M1.4 1.4h7.2v7.2H1.4z" fill="#e9ecf3" stroke="#5a5f6b" stroke-width=".9"></path><circle cx="3.4" cy="4" r="1.3" fill="none" stroke="#5a5f6b" stroke-width=".7"></circle><path d="M3.6 7.4L7.6 3" stroke="#5a5f6b" stroke-width=".8"></path></svg><div style="left:411.2px;top:37.5px;width:0.8px;height:13px;background:#8d92a2;"></div><svg style="left:425px;top:43.35px" width="3.4" height="1.9" viewBox="0 0 3.4 1.9"><path d="M0 0H3.4L1.7 1.9Z" fill="#8d92a1"></path></svg><div style="left:432.4px;top:37.5px;width:0.8px;height:13px;background:#8d92a2;"></div><svg style="left:438.9px;top:38.9px" width="10.2" height="10.2" viewBox="0 0 10 10"><path d="M3 2h2.4l.8.9H9v4.9H3z" fill="#e7a944"></path><circle cx="3.2" cy="6" r="1.6" fill="#d6dbe9" stroke="#1a5db0" stroke-width=".8"></circle><path d="M2.2 7.2L.8 9" stroke="#1a5db0" stroke-width="1"></path></svg><div style="left:453.8px;top:37.3px;width:118.5px;height:13.5px;background:#fdfdff;box-sizing:border-box;border:.6px solid #c3c9d9"></div><svg style="left:566.3px;top:43.35px" width="3.4" height="1.9" viewBox="0 0 3.4 1.9"><path d="M0 0H3.4L1.7 1.9Z" fill="#1e1e1e"></path></svg><div style="left:577.3px;top:37.5px;width:0.8px;height:13px;background:#8d92a2;"></div><svg style="left:582.8px;top:38.9px" width="10.2" height="10.2" viewBox="0 0 10 10"><path d="M1.2 1.4h7.6v6.2H1.2z" fill="none" stroke="#3b3f4a" stroke-width=".9"></path><path d="M1.2 1.4h7.6v1.4H1.2z" fill="#3b3f4a"></path><path d="M1 5.6l2.2 1.6L1 8.8zM4.6 5l-1 2.2 1 2.2.9-.4V5.4z" fill="#7b2fa0"></path></svg><svg style="left:598.1px;top:38.9px" width="10.2" height="10.2" viewBox="0 0 10 10"><path d="M8.6 2.2L7 3.8 5.8 2.6 7.4 1C6 .6 4.4 1.600 4.600 3.400L1 7l1.600 1.600L6.200 5c1.800.200 2.800-1.400 2.400-2.800z" fill="#2b2b2b"></path></svg><svg style="left:612.9px;top:38.9px" width="10.2" height="10.2" viewBox="0 0 10 10"><path d="M1 3.600h8v5.200H1z" fill="#2b2b2b"></path><path d="M3.400 3.600V2h3.200v1.600" fill="none" stroke="#2b2b2b" stroke-width=".9"></path><path d="M1 5.800h8" stroke="#d6dbe9" stroke-width=".7"></path></svg><svg style="left:628.2px;top:38.9px" width="10.2" height="10.2" viewBox="0 0 10 10"><path d="M.8 1.800h8.400v6.400H.8z" fill="#eef0f5" stroke="#4a4e59" stroke-width=".8"></path><path d="M2.400 3.800l1.400 1.200-1.400 1.200" fill="none" stroke="#4a4e59" stroke-width=".7"></path></svg><svg style="left:642.9px;top:43.5px" width="2.8" height="1.6" viewBox="0 0 2.8 1.6"><path d="M0 0H2.8L1.4 1.6Z" fill="#1e1e1e"></path></svg><svg style="left:649.9px;top:43.2px" width="6" height="6" viewBox="0 0 10 10"><path d="M2 3.400h6" stroke="#1e1e1e" stroke-width="1"></path><path d="M2.400 5.400h5.200L5 8z" fill="#1e1e1e"></path></svg><svg style="left:15.7px;top:57.1px" width="10.2" height="10.2" viewBox="0 0 10 10"><path d="M3.600.8v2.400M6.400.8v2.400" stroke="#a9aebb" stroke-width=".9"></path><path d="M2.400 3.200h5.200v2.200L6.200 6.800H3.800L2.400 5.400z" fill="#a9aebb"></path><path d="M5 6.800v2.600" stroke="#a9aebb" stroke-width="1"></path></svg><svg style="left:30.3px;top:57.1px" width="10.2" height="10.2" viewBox="0 0 10 10"><path d="M5.600 1.200v2.200M7.800 1.200v2.200" stroke="#2b2b2b" stroke-width=".9"></path><path d="M4.400 3.200h4.600v2.200L7.800 6.800H5.600L4.400 5.400z" fill="#2b2b2b"></path><path d="M6.700 6.800v2.800" stroke="#2b2b2b" stroke-width="1.200"></path><path d="M.8.800l3.600 3" stroke="#1a5db0" stroke-width="1.600"></path><path d="M.4 1.800L1.800.4" stroke="#1a5db0" stroke-width=".8"></path></svg><div style="left:44.3px;top:55.7px;width:0.8px;height:13px;background:#8d92a2;"></div><div style="left:50.5px;top:55.4px;width:102.7px;height:13.1px;background:#fdfdff;box-sizing:border-box;border:.6px solid #c3c9d9"></div><span style="left: 52.6px; top: 56.85px; font-size: 7.5px; line-height: 10px; color: rgb(30, 30, 30); transform: scaleX(0.9726);">QLSinhVien</span><svg style="left:147px;top:61.55px" width="3.4" height="1.9" viewBox="0 0 3.4 1.9"><path d="M0 0H3.4L1.7 1.9Z" fill="#1e1e1e"></path></svg><div style="left:158px;top:55.7px;width:0.8px;height:13px;background:#8d92a2;"></div><svg style="left:163.9px;top:58px" width="8.4" height="8.4" viewBox="0 0 10 10"><path d="M2.400 1.200L8.400 5l-6 3.800z" fill="#8fd08f" stroke="#2f9a35" stroke-width="1.300" stroke-linejoin="round"></path></svg><span style="left: 176.8px; top: 57.25px; font-size: 7.5px; line-height: 10px; color: rgb(30, 30, 30); transform: scaleX(0.9298);">Execute</span><svg style="left:211.1px;top:58.2px" width="8" height="8" viewBox="0 0 10 10"><rect x="2" y="2" width="6" height="6" fill="#b5b9c5"></rect></svg><svg style="left:225.1px;top:57.9px" width="8.6" height="8.6" viewBox="0 0 10 10"><path d="M1.400 5.400l2.400 2.800L8.600 1.400" fill="none" stroke="#1e1e1e" stroke-width="1.500"></path></svg><svg style="left:239.2px;top:57.1px" width="10.2" height="10.2" viewBox="0 0 10 10"><rect x="1" y="1" width="2.600" height="2.600" fill="none" stroke="#4a4e59" stroke-width=".7"></rect><rect x="6.400" y="1" width="2.600" height="2.600" fill="none" stroke="#4a4e59" stroke-width=".7"></rect><rect x="1" y="6.400" width="2.600" height="2.600" fill="none" stroke="#4a4e59" stroke-width=".7"></rect><rect x="6.400" y="6.400" width="2.600" height="2" fill="none" stroke="#4a4e59" stroke-width=".7"></rect><path d="M3.600 2.300h2.800M2.300 3.600v2.800M3.600 6.600L6.400 3.600" stroke="#4a4e59" stroke-width=".6"></path></svg><svg style="left:254px;top:57.1px" width="10.2" height="10.2" viewBox="0 0 10 10"><path d="M2.600 1.400h6.600v5.400H2.600z" fill="#eef0f5" stroke="#3b3f4a" stroke-width=".8"></path><path d="M.8 3.200h6.600v5.600H.8z" fill="#eef0f5" stroke="#3b3f4a" stroke-width=".8"></path><path d="M.8 3.200h6.600v1.400H.8z" fill="#3b3f4a"></path></svg><div style="left:267.1px;top:55.1px;width:13.4px;height:13.6px;background:#f8f9fc;box-sizing:border-box;border:.7px solid #3d4d72"></div><svg style="left:269.5px;top:57.9px" width="8.6" height="8.6" viewBox="0 0 10 10"><path d="M1.400 1h7.200v8H1.400z" fill="#d5d8e0" stroke="#5a5f6b" stroke-width=".8"></path><rect x="2.400" y="5" width="5.200" height="3.200" fill="#8d919c"></rect></svg><div style="left:283px;top:55.7px;width:0.8px;height:13px;background:#8d92a2;"></div><svg style="left:289.2px;top:57.1px" width="10.2" height="10.2" viewBox="0 0 10 10"><rect x="1" y="1" width="2.400" height="2.400" fill="none" stroke="#4a4e59" stroke-width=".7"></rect><rect x="6.400" y="1" width="2.400" height="2" fill="none" stroke="#4a4e59" stroke-width=".7"></rect><path d="M3.400 2.200h3M2.200 3.400V9" stroke="#4a4e59" stroke-width=".7"></path></svg><svg style="left:303.5px;top:57.1px" width="10.2" height="10.2" viewBox="0 0 10 10"><rect x="1" y="1" width="2.600" height="2.600" fill="none" stroke="#4a4e59" stroke-width=".7"></rect><rect x="6.400" y="1" width="2.600" height="2.600" fill="none" stroke="#4a4e59" stroke-width=".7"></rect><rect x="1" y="6.400" width="2.600" height="2.600" fill="none" stroke="#4a4e59" stroke-width=".7"></rect><path d="M3.600 2.300h2.800M2.300 3.600v2.800" stroke="#4a4e59" stroke-width=".6"></path><circle cx="7.400" cy="7.400" r="1.900" fill="#3c9b3c"></circle></svg><svg style="left:318.6px;top:57.1px" width="10.2" height="10.2" viewBox="0 0 10 10"><path d="M1 3.400h4.800V9H1z" fill="#2b2b2b"></path><path d="M1.800 4.200h3.200v1.200H1.800z" fill="#d6dbe9"></path><path d="M4.600 1h4.600v3.600H6.400" fill="none" stroke="#4a4e59" stroke-width=".8"></path><path d="M6.800 6h2.400v2H6.800z" fill="#6a6f7c"></path></svg><div style="left:333px;top:55.7px;width:0.8px;height:13px;background:#8d92a2;"></div><svg style="left:339.3px;top:57.1px" width="10.2" height="10.2" viewBox="0 0 10 10"><path d="M3.800 1h5v6.400h-5z" fill="#eef0f5" stroke="#4a4e59" stroke-width=".8"></path><path d="M.8 4.600h4.800v4.200H.8z" fill="#c9cdd8" stroke="#4a4e59" stroke-width=".7"></path><path d="M.8 6.600h4.800" stroke="#4a4e59" stroke-width=".5"></path></svg><div style="left:351.4px;top:55.1px;width:14.3px;height:13.6px;background:#f8f9fc;box-sizing:border-box;border:.7px solid #3d4d72"></div><svg style="left:354px;top:57.7px" width="9" height="9" viewBox="0 0 10 10"><path d="M.8 1.200h8.400v7.600H.8z" fill="#fff" stroke="#2b2b2b" stroke-width=".8"></path><path d="M.8 1.200h8.400v2H.8z" fill="#2b2b2b"></path><path d="M.8 5.200h8.400M.8 7h8.400M3.600 3.200v5.600M6.400 3.200v5.600" stroke="#2b2b2b" stroke-width=".6"></path></svg><svg style="left:368.5px;top:57.1px" width="10.2" height="10.2" viewBox="0 0 10 10"><path d="M3.600 1.200h3.400L8.800 3v5.400H3.600z" fill="#eef0f5" stroke="#4a4e59" stroke-width=".8"></path><path d="M.8 5.800h4.400v3H.8z" fill="#4a4e59"></path></svg><div style="left:382.4px;top:55.7px;width:0.8px;height:13px;background:#8d92a2;"></div><svg style="left:389.2px;top:57.5px" width="9.4" height="9.4" viewBox="0 0 10 10"><path d="M2.400 2h6.400" stroke="#3c9b3c" stroke-width="1.500"></path><path d="M3.600 4.400h5.200M3.600 6.200h5.200M3.600 8h5.200" stroke="#555b66" stroke-width=".9"></path></svg><svg style="left:403.3px;top:57.5px" width="9.4" height="9.4" viewBox="0 0 10 10"><path d="M1 2.800C1.400 1 4.200 1 4.200 2.800 4.200 3.800 3.200 3.800 3.200 4.800" fill="none" stroke="#1a5db0" stroke-width="1.200"></path><path d="M5.400 3h3.800M4.600 5h4.600M4.600 6.800h4.600M4.600 8.600h4.600" stroke="#555b66" stroke-width=".9"></path></svg><div style="left:417.1px;top:55.7px;width:0.8px;height:13px;background:#8d92a2;"></div><svg style="left:423.3px;top:57.1px" width="10.2" height="10.2" viewBox="0 0 10 10"><path d="M.4 2.600h3.400M6.200 2.600h3.400M.4 7.400h3.400M6.200 7.400h3.400M6.600 5h3" stroke="#555b66" stroke-width=".9"></path><path d="M6.600 5H2.800M4.600 2.800L2.400 5l2.200 2.200" fill="none" stroke="#1a5db0" stroke-width="1.300"></path></svg><svg style="left:437.8px;top:57.1px" width="10.2" height="10.2" viewBox="0 0 10 10"><path d="M.4 2.600h3.400M6.200 2.600h3.400M.4 7.400h3.400M6.200 7.400h3.400M6.800 5h2.800" stroke="#555b66" stroke-width=".9"></path><path d="M.6 5h3.800M2.600 2.800L4.800 5 2.600 7.200" fill="none" stroke="#1a5db0" stroke-width="1.300"></path></svg><div style="left:452px;top:55.7px;width:0.8px;height:13px;background:#8d92a2;"></div><svg style="left:458.2px;top:57.1px" width="10.2" height="10.2" viewBox="0 0 10 10"><circle cx="6.200" cy="5.800" r="2.800" fill="none" stroke="#4a4e59" stroke-width=".8"></circle><circle cx="6.200" cy="5.800" r="1.200" fill="none" stroke="#4a4e59" stroke-width=".6"></circle><path d="M.6 3h3.600M2.800 1.400L4.400 3 2.800 4.600" fill="none" stroke="#1a5db0" stroke-width="1.100"></path></svg><svg style="left:472.6px;top:61.4px" width="6" height="6" viewBox="0 0 10 10"><path d="M2 3.400h6" stroke="#1e1e1e" stroke-width="1"></path><path d="M2.400 5.400h5.200L5 8z" fill="#1e1e1e"></path></svg><div style="left:4.2px;top:73.9px;width:164.2px;height:346.4px;background:#8593b4;"></div><div style="left:4.8px;top:74.2px;width:163px;height:15.2px;background:#4d6082;"></div><span style="left: 7.8px; top: 77.05px; font-size: 8px; line-height: 10px; color: rgb(255, 255, 255); transform: scaleX(0.945);">Object Explorer</span><svg style="left:133.6px;top:81.65px" width="3.8" height="2.1" viewBox="0 0 3.8 2.1"><path d="M0 0H3.8L1.9 2.1Z" fill="#ffffff"></path></svg><svg style="left:145px;top:78.8px" width="5" height="7" viewBox="0 0 5 7"><path d="M1.500.500h2v3.200h-2z" fill="none" stroke="#fff" stroke-width=".7"></path><path d="M.6 3.900h3.800M2.500 3.900v2.800" stroke="#fff" stroke-width=".7"></path></svg><svg style="left:156.1px;top:79.5px" width="5.6" height="5.6" viewBox="0 0 5.6 5.6"><path d="M.3.300l5 5M5.300.3l-5 5" stroke="#fff" stroke-width=".8"></path></svg><div style="left:5px;top:88.9px;width:162.6px;height:330.6px;background:#e4e6ee;"></div><div style="left:4.8px;top:89.4px;width:163px;height:18.1px;background:#cfd6e5;"></div><span style="left: 9.8px; top: 93.35px; font-size: 7.8px; line-height: 10px; color: rgb(30, 30, 30); transform: scaleX(0.9572);">Connect</span><svg style="left:40px;top:98.25px" width="3" height="1.7" viewBox="0 0 3 1.7"><path d="M0 0H3L1.5 1.7Z" fill="#1e1e1e"></path></svg><svg style="left:48.7px;top:93.7px" width="10.2" height="10.2" viewBox="0 0 10 10"><path d="M3.500.6v2.800M6.500.6v2.800" stroke="#2b2b2b" stroke-width="1.100"></path><path d="M2.200 3.200h5.600v2.400L6.400 7.200H3.600L2.200 5.600z" fill="#2b2b2b"></path><path d="M5 7v2.800" stroke="#2b2b2b" stroke-width="1.300"></path></svg><svg style="left:63.3px;top:93.7px" width="10.2" height="10.2" viewBox="0 0 10 10"><path d="M5.700.6v2.800M8.300.6v2.800" stroke="#2b2b2b" stroke-width="1"></path><path d="M4.500 3.200h5v2.400L8.300 7.200H5.700L4.500 5.600z" fill="#2b2b2b"></path><path d="M7 7v2.800" stroke="#2b2b2b" stroke-width="1.200"></path><path d="M.6.800l2.400 2.400M3 .8L.6 3.200" stroke="#d32424" stroke-width=".9"></path></svg><svg style="left:79.6px;top:95px" width="7.4" height="7.4" viewBox="0 0 10 10"><rect x="2" y="2" width="6" height="6" fill="#b5b9c5"></rect></svg><svg style="left:93.8px;top:94.8px" width="8.2" height="8.2" viewBox="0 0 10 10"><path d="M.8 1.200h8.400L6 5v4L4 7.800V5z" fill="#2b2b2b"></path></svg><svg style="left:108.1px;top:94px" width="9.4" height="9.4" viewBox="0 0 10 10"><path d="M7.900 3.200A3.500 3.500 0 1 0 8.500 5.600" fill="none" stroke="#1a5db0" stroke-width="1.300"></path><path d="M5.400.4l3.200 2.400-3.400 1.400z" fill="#1a5db0"></path></svg><svg style="left:122.8px;top:94.5px" width="9.2" height="9.2" viewBox="0 0 10 10"><path d="M.4 5.400h2.200L3.800 2l1.600 6 1.400-4 .8 1.400h2" fill="none" stroke="#2b2b2b" stroke-width=".9"></path></svg><div class="clip" style="left:4.8px;top:107.5px;width:150.8px;height:300.9px;background:#fff"><div style="left:43px;top:61.3px;width:69.4px;height:12.1px;background:#e4e5ea;"></div><svg style="left:3.1px;top:3.8px" width="5.8" height="5.8" viewBox="0 0 5.8 5.8"><rect x=".4" y=".4" width="5" height="5" fill="#fff" stroke="#a4a9b8" stroke-width=".6"></rect><path d="M1.500 2.900h2.800" stroke="#5b6577" stroke-width=".7"></path></svg><svg style="left:10.8px;top:3.5px" width="6.6" height="6.6" viewBox="0 0 6.6 6.6"><path d="M.4 1h4.400v5H.4z" fill="#3a3d46"></path><path d="M.4 2.600h4.400" stroke="#d8dbe3" stroke-width=".5"></path><circle cx="4.800" cy="4.800" r="1.700" fill="#2f9e3b"></circle></svg><span class="tr" style="left: 20.1px; top: 1.35px; font-size: 8px; line-height: 10px; color: rgb(30, 30, 30); transform: scaleX(0.8609);">DESKTOP-E01FDDP\SQLEXPRESS (SQL</span><svg style="left:11.25px;top:15.95px" width="5.8" height="5.8" viewBox="0 0 5.8 5.8"><rect x=".4" y=".4" width="5" height="5" fill="#fff" stroke="#a4a9b8" stroke-width=".6"></rect><path d="M1.500 2.900h2.800" stroke="#5b6577" stroke-width=".7"></path></svg><svg style="left:19.05px;top:15.65px" width="6.4" height="5.4" viewBox="0 0 6.4 5.4"><path d="M0 .9h2.400l.7.800h3.300v3.700H0z" fill="#dcb67a"></path></svg><span class="tr" style="left: 28.22px; top: 13.5px; font-size: 8px; line-height: 10px; color: rgb(30, 30, 30); transform: scaleX(0.912);">Databases</span><svg style="left:19.4px;top:28.1px" width="5.8" height="5.8" viewBox="0 0 5.8 5.8"><rect x=".4" y=".4" width="5" height="5" fill="#fff" stroke="#a4a9b8" stroke-width=".6"></rect><path d="M1.500 2.900h2.800" stroke="#5b6577" stroke-width=".7"></path><path d="M2.900 1.500v2.800" stroke="#4b5567" stroke-width=".7"></path></svg><svg style="left:27.2px;top:27.8px" width="6.4" height="5.4" viewBox="0 0 6.4 5.4"><path d="M0 .9h2.400l.7.800h3.300v3.700H0z" fill="#dcb67a"></path></svg><span class="tr" style="left: 36.34px; top: 25.65px; font-size: 8px; line-height: 10px; color: rgb(30, 30, 30); transform: scaleX(0.9213);">System Databases</span><svg style="left:19.4px;top:40.25px" width="5.8" height="5.8" viewBox="0 0 5.8 5.8"><rect x=".4" y=".4" width="5" height="5" fill="#fff" stroke="#a4a9b8" stroke-width=".6"></rect><path d="M1.500 2.900h2.800" stroke="#5b6577" stroke-width=".7"></path><path d="M2.900 1.500v2.800" stroke="#4b5567" stroke-width=".7"></path></svg><svg style="left:27.2px;top:39.95px" width="6.4" height="5.4" viewBox="0 0 6.4 5.4"><path d="M0 .9h2.400l.7.800h3.300v3.700H0z" fill="#dcb67a"></path></svg><span class="tr" style="left: 36.34px; top: 37.8px; font-size: 8px; line-height: 10px; color: rgb(30, 30, 30); transform: scaleX(0.9338);">Database Snapshots</span><svg style="left:19.4px;top:52.4px" width="5.8" height="5.8" viewBox="0 0 5.8 5.8"><rect x=".4" y=".4" width="5" height="5" fill="#fff" stroke="#a4a9b8" stroke-width=".6"></rect><path d="M1.500 2.900h2.800" stroke="#5b6577" stroke-width=".7"></path></svg><svg style="left:27.6px;top:52px" width="5.6" height="6.8" viewBox="0 0 5.6 6.8"><path d="M.3 1.200h5v4.600c0 1.200-5 1.200-5 0z" fill="#222"></path><ellipse cx="2.800" cy="1.300" rx="2.500" ry="1.100" fill="#555" stroke="#222" stroke-width=".4"></ellipse></svg><span class="tr" style="left: 36.34px; top: 49.95px; font-size: 8px; line-height: 10px; color: rgb(30, 30, 30); transform: scaleX(0.9039);">QLSinhVien</span><svg style="left:35.35px;top:64.25px" width="6.4" height="5.4" viewBox="0 0 6.4 5.4"><path d="M0 .9h2.400l.7.800h3.300v3.700H0z" fill="#dcb67a"></path></svg><span class="tr" style="left: 44.46px; top: 62.1px; font-size: 8px; line-height: 10px; color: rgb(30, 30, 30); transform: scaleX(0.9412);">Database Diagrams</span><svg style="left:27.55px;top:76.7px" width="5.8" height="5.8" viewBox="0 0 5.8 5.8"><rect x=".4" y=".4" width="5" height="5" fill="#fff" stroke="#a4a9b8" stroke-width=".6"></rect><path d="M1.500 2.900h2.800" stroke="#5b6577" stroke-width=".7"></path></svg><svg style="left:35.35px;top:76.4px" width="6.4" height="5.4" viewBox="0 0 6.4 5.4"><path d="M0 .9h2.400l.7.800h3.300v3.700H0z" fill="#dcb67a"></path></svg><span class="tr" style="left: 44.46px; top: 74.25px; font-size: 8px; line-height: 10px; color: rgb(30, 30, 30); transform: scaleX(0.9315);">Tables</span><svg style="left:35.7px;top:88.85px" width="5.8" height="5.8" viewBox="0 0 5.8 5.8"><rect x=".4" y=".4" width="5" height="5" fill="#fff" stroke="#a4a9b8" stroke-width=".6"></rect><path d="M1.500 2.900h2.800" stroke="#5b6577" stroke-width=".7"></path><path d="M2.900 1.500v2.800" stroke="#4b5567" stroke-width=".7"></path></svg><svg style="left:43.5px;top:88.55px" width="6.4" height="5.4" viewBox="0 0 6.4 5.4"><path d="M0 .9h2.400l.7.800h3.300v3.700H0z" fill="#dcb67a"></path></svg><span class="tr" style="left: 52.58px; top: 86.4px; font-size: 8px; line-height: 10px; color: rgb(30, 30, 30); transform: scaleX(0.9373);">System Tables</span><svg style="left:35.7px;top:101px" width="5.8" height="5.8" viewBox="0 0 5.8 5.8"><rect x=".4" y=".4" width="5" height="5" fill="#fff" stroke="#a4a9b8" stroke-width=".6"></rect><path d="M1.500 2.900h2.800" stroke="#5b6577" stroke-width=".7"></path><path d="M2.900 1.500v2.800" stroke="#4b5567" stroke-width=".7"></path></svg><svg style="left:43.5px;top:100.7px" width="6.4" height="5.4" viewBox="0 0 6.4 5.4"><path d="M0 .9h2.400l.7.800h3.300v3.700H0z" fill="#dcb67a"></path></svg><span class="tr" style="left: 52.58px; top: 98.55px; font-size: 8px; line-height: 10px; color: rgb(30, 30, 30); transform: scaleX(0.9002);">FileTables</span><svg style="left:35.7px;top:113.15px" width="5.8" height="5.8" viewBox="0 0 5.8 5.8"><rect x=".4" y=".4" width="5" height="5" fill="#fff" stroke="#a4a9b8" stroke-width=".6"></rect><path d="M1.500 2.900h2.800" stroke="#5b6577" stroke-width=".7"></path><path d="M2.900 1.500v2.800" stroke="#4b5567" stroke-width=".7"></path></svg><svg style="left:43.5px;top:112.85px" width="6.4" height="5.4" viewBox="0 0 6.4 5.4"><path d="M0 .9h2.400l.7.800h3.300v3.700H0z" fill="#dcb67a"></path></svg><span class="tr" style="left: 52.58px; top: 110.7px; font-size: 8px; line-height: 10px; color: rgb(30, 30, 30); transform: scaleX(0.9114);">External Tables</span><svg style="left:35.7px;top:125.3px" width="5.8" height="5.8" viewBox="0 0 5.8 5.8"><rect x=".4" y=".4" width="5" height="5" fill="#fff" stroke="#a4a9b8" stroke-width=".6"></rect><path d="M1.500 2.900h2.800" stroke="#5b6577" stroke-width=".7"></path><path d="M2.900 1.500v2.800" stroke="#4b5567" stroke-width=".7"></path></svg><svg style="left:43.5px;top:125px" width="6.4" height="5.4" viewBox="0 0 6.4 5.4"><path d="M0 .9h2.400l.7.800h3.300v3.700H0z" fill="#dcb67a"></path></svg><span class="tr" style="left: 52.58px; top: 122.85px; font-size: 8px; line-height: 10px; color: rgb(30, 30, 30); transform: scaleX(0.9364);">Graph Tables</span><svg style="left:35.7px;top:137.45px" width="5.8" height="5.8" viewBox="0 0 5.8 5.8"><rect x=".4" y=".4" width="5" height="5" fill="#fff" stroke="#a4a9b8" stroke-width=".6"></rect><path d="M1.500 2.900h2.800" stroke="#5b6577" stroke-width=".7"></path><path d="M2.900 1.500v2.800" stroke="#4b5567" stroke-width=".7"></path></svg><svg style="left:43.5px;top:137.65px" width="6.4" height="5.6" viewBox="0 0 6.4 5.6"><path d="M.2.200h6v5.200H.2z" fill="#fff" stroke="#333" stroke-width=".5"></path><path d="M.2.200h6v1.600H.2z" fill="#333"></path><path d="M2.200 1.800v3.600M4.200 1.800v3.600M.2 3.600h6" stroke="#333" stroke-width=".5"></path></svg><span class="tr" style="left: 52.58px; top: 135px; font-size: 8px; line-height: 10px; color: rgb(30, 30, 30); transform: scaleX(0.9705);">dbo.DMKhoa</span><svg style="left:35.7px;top:149.6px" width="5.8" height="5.8" viewBox="0 0 5.8 5.8"><rect x=".4" y=".4" width="5" height="5" fill="#fff" stroke="#a4a9b8" stroke-width=".6"></rect><path d="M1.500 2.900h2.800" stroke="#5b6577" stroke-width=".7"></path><path d="M2.900 1.500v2.800" stroke="#4b5567" stroke-width=".7"></path></svg><svg style="left:43.5px;top:149.8px" width="6.4" height="5.6" viewBox="0 0 6.4 5.6"><path d="M.2.200h6v5.200H.2z" fill="#fff" stroke="#333" stroke-width=".5"></path><path d="M.2.200h6v1.600H.2z" fill="#333"></path><path d="M2.200 1.800v3.600M4.200 1.800v3.600M.2 3.600h6" stroke="#333" stroke-width=".5"></path></svg><span class="tr" style="left: 52.58px; top: 147.15px; font-size: 8px; line-height: 10px; color: rgb(30, 30, 30); transform: scaleX(1.0055);">dbo.DMMonHoc</span><svg style="left:35.7px;top:161.75px" width="5.8" height="5.8" viewBox="0 0 5.8 5.8"><rect x=".4" y=".4" width="5" height="5" fill="#fff" stroke="#a4a9b8" stroke-width=".6"></rect><path d="M1.500 2.900h2.800" stroke="#5b6577" stroke-width=".7"></path><path d="M2.900 1.500v2.800" stroke="#4b5567" stroke-width=".7"></path></svg><svg style="left:43.5px;top:161.95px" width="6.4" height="5.6" viewBox="0 0 6.4 5.6"><path d="M.2.200h6v5.200H.2z" fill="#fff" stroke="#333" stroke-width=".5"></path><path d="M.2.200h6v1.600H.2z" fill="#333"></path><path d="M2.200 1.800v3.600M4.200 1.800v3.600M.2 3.600h6" stroke="#333" stroke-width=".5"></path></svg><span class="tr" style="left: 52.58px; top: 159.3px; font-size: 8px; line-height: 10px; color: rgb(30, 30, 30); transform: scaleX(0.9395);">dbo.DSSinhVien</span><svg style="left:35.7px;top:173.9px" width="5.8" height="5.8" viewBox="0 0 5.8 5.8"><rect x=".4" y=".4" width="5" height="5" fill="#fff" stroke="#a4a9b8" stroke-width=".6"></rect><path d="M1.500 2.900h2.800" stroke="#5b6577" stroke-width=".7"></path><path d="M2.900 1.500v2.800" stroke="#4b5567" stroke-width=".7"></path></svg><svg style="left:43.5px;top:174.1px" width="6.4" height="5.6" viewBox="0 0 6.4 5.6"><path d="M.2.200h6v5.200H.2z" fill="#fff" stroke="#333" stroke-width=".5"></path><path d="M.2.200h6v1.600H.2z" fill="#333"></path><path d="M2.200 1.800v3.600M4.200 1.800v3.600M.2 3.600h6" stroke="#333" stroke-width=".5"></path></svg><span class="tr" style="left: 52.58px; top: 171.45px; font-size: 8px; line-height: 10px; color: rgb(30, 30, 30); transform: scaleX(0.921);">dbo.DSSV_Nu</span><svg style="left:35.7px;top:186.05px" width="5.8" height="5.8" viewBox="0 0 5.8 5.8"><rect x=".4" y=".4" width="5" height="5" fill="#fff" stroke="#a4a9b8" stroke-width=".6"></rect><path d="M1.500 2.900h2.800" stroke="#5b6577" stroke-width=".7"></path></svg><svg style="left:43.5px;top:186.25px" width="6.4" height="5.6" viewBox="0 0 6.4 5.6"><path d="M.2.200h6v5.200H.2z" fill="#fff" stroke="#333" stroke-width=".5"></path><path d="M.2.200h6v1.600H.2z" fill="#333"></path><path d="M2.200 1.800v3.600M4.200 1.800v3.600M.2 3.600h6" stroke="#333" stroke-width=".5"></path></svg><span class="tr" style="left: 52.58px; top: 183.6px; font-size: 8px; line-height: 10px; color: rgb(30, 30, 30); transform: scaleX(0.9513);">dbo.KetQua</span><svg style="left:43.85px;top:198.2px" width="5.8" height="5.8" viewBox="0 0 5.8 5.8"><rect x=".4" y=".4" width="5" height="5" fill="#fff" stroke="#a4a9b8" stroke-width=".6"></rect><path d="M1.500 2.900h2.800" stroke="#5b6577" stroke-width=".7"></path></svg><svg style="left:51.65px;top:197.9px" width="6.4" height="5.4" viewBox="0 0 6.4 5.4"><path d="M0 .9h2.400l.7.800h3.300v3.700H0z" fill="#dcb67a"></path></svg><span class="tr" style="left: 60.7px; top: 195.75px; font-size: 8px; line-height: 10px; color: rgb(30, 30, 30); transform: scaleX(0.963);">Columns</span><svg style="left:60.5px;top:211.65px" width="6.2" height="3.4" viewBox="0 0 6.2 3.4"><circle cx="4.700" cy="1.700" r="1.200" fill="none" stroke="#222" stroke-width=".8"></circle><path d="M0 1.700h3.500" stroke="#222" stroke-width=".9"></path></svg><span class="tr" style="left: 68.82px; top: 207.9px; font-size: 8px; line-height: 10px; color: rgb(30, 30, 30); transform: scaleX(0.8922);">MaSV (PK, FK, char(3), no</span><svg style="left:60.5px;top:223.8px" width="6.2" height="3.4" viewBox="0 0 6.2 3.4"><circle cx="4.700" cy="1.700" r="1.200" fill="none" stroke="#222" stroke-width=".8"></circle><path d="M0 1.700h3.500" stroke="#222" stroke-width=".9"></path></svg><span class="tr" style="left: 68.82px; top: 220.05px; font-size: 8px; line-height: 10px; color: rgb(30, 30, 30); transform: scaleX(0.8996);">MaMH (PK, FK, char(2), no</span><svg style="left:60.5px;top:235.95px" width="6.2" height="3.4" viewBox="0 0 6.2 3.4"><circle cx="4.700" cy="1.700" r="1.200" fill="none" stroke="#222" stroke-width=".8"></circle><path d="M0 1.700h3.500" stroke="#222" stroke-width=".9"></path></svg><span class="tr" style="left: 68.82px; top: 232.2px; font-size: 8px; line-height: 10px; color: rgb(30, 30, 30); transform: scaleX(0.9297);">LanThi (PK, tinyint, not nu</span><svg style="left:61.3px;top:246.7px" width="3.4" height="6.2" viewBox="0 0 3.4 6.2"><path d="M.4.400h2.600v5.400H.4z" fill="#fff" stroke="#333" stroke-width=".6"></path><path d="M.4 2.200h2.600M.4 4h2.600" stroke="#333" stroke-width=".5"></path></svg><span class="tr" style="left: 68.82px; top: 244.35px; font-size: 8px; line-height: 10px; color: rgb(30, 30, 30); transform: scaleX(0.9351);">Diem (decimal(4,2), null)</span><svg style="left:61.3px;top:258.85px" width="3.4" height="6.2" viewBox="0 0 3.4 6.2"><path d="M.4.400h2.600v5.400H.4z" fill="#fff" stroke="#333" stroke-width=".6"></path><path d="M.4 2.200h2.600M.4 4h2.600" stroke="#333" stroke-width=".5"></path></svg><span class="tr" style="left: 68.82px; top: 256.5px; font-size: 8px; line-height: 10px; color: rgb(30, 30, 30); transform: scaleX(0.9391);">TinhTrang (int, null)</span><svg style="left:43.85px;top:271.1px" width="5.8" height="5.8" viewBox="0 0 5.8 5.8"><rect x=".4" y=".4" width="5" height="5" fill="#fff" stroke="#a4a9b8" stroke-width=".6"></rect><path d="M1.500 2.900h2.800" stroke="#5b6577" stroke-width=".7"></path><path d="M2.900 1.500v2.800" stroke="#4b5567" stroke-width=".7"></path></svg><svg style="left:51.65px;top:270.8px" width="6.4" height="5.4" viewBox="0 0 6.4 5.4"><path d="M0 .9h2.400l.7.800h3.300v3.700H0z" fill="#dcb67a"></path></svg><span class="tr" style="left: 60.7px; top: 268.65px; font-size: 8px; line-height: 10px; color: rgb(30, 30, 30); transform: scaleX(0.8771);">Keys</span><svg style="left:43.85px;top:283.25px" width="5.8" height="5.8" viewBox="0 0 5.8 5.8"><rect x=".4" y=".4" width="5" height="5" fill="#fff" stroke="#a4a9b8" stroke-width=".6"></rect><path d="M1.500 2.900h2.800" stroke="#5b6577" stroke-width=".7"></path><path d="M2.900 1.500v2.800" stroke="#4b5567" stroke-width=".7"></path></svg><svg style="left:51.65px;top:282.95px" width="6.4" height="5.4" viewBox="0 0 6.4 5.4"><path d="M0 .9h2.400l.7.800h3.300v3.700H0z" fill="#dcb67a"></path></svg><span class="tr" style="left: 60.7px; top: 280.8px; font-size: 8px; line-height: 10px; color: rgb(30, 30, 30); transform: scaleX(0.9515);">Constraints</span><svg style="left:43.85px;top:295.4px" width="5.8" height="5.8" viewBox="0 0 5.8 5.8"><rect x=".4" y=".4" width="5" height="5" fill="#fff" stroke="#a4a9b8" stroke-width=".6"></rect><path d="M1.500 2.900h2.800" stroke="#5b6577" stroke-width=".7"></path><path d="M2.900 1.500v2.800" stroke="#4b5567" stroke-width=".7"></path></svg><svg style="left:51.65px;top:295.1px" width="6.4" height="5.4" viewBox="0 0 6.4 5.4"><path d="M0 .9h2.400l.7.800h3.300v3.700H0z" fill="#dcb67a"></path></svg><span class="tr" style="left: 60.7px; top: 292.95px; font-size: 8px; line-height: 10px; color: rgb(30, 30, 30); transform: scaleX(0.9538);">Triggers</span></div><div style="left:155.6px;top:107.5px;width:12.2px;height:300.9px;background:#e8e8ec;"></div><svg style="left:158.9px;top:112.4px" width="5.6" height="3.4" viewBox="0 0 5.6 3.4"><path d="M.4 3L2.800.6 5.200 3" fill="none" stroke="#3b3f4a" stroke-width=".9"></path></svg><div style="left:156.2px;top:119.7px;width:11px;height:166px;background:#c2c3c9;"></div><svg style="left:158.9px;top:401px" width="5.6" height="3.4" viewBox="0 0 5.6 3.4"><path d="M.4.4l2.400 2.400L5.200.4" fill="none" stroke="#3b3f4a" stroke-width=".9"></path></svg><div style="left:4.8px;top:408.4px;width:163px;height:11.3px;background:#e8e8ec;"></div><div style="left:17.1px;top:409.1px;width:55.4px;height:9.8px;background:#c2c3c9;"></div><svg style="left:9.5px;top:411.1px" width="3.4" height="5.6" viewBox="0 0 3.4 5.6"><path d="M3 .4L.6 2.800 3 5.200" fill="none" stroke="#3b3f4a" stroke-width=".9"></path></svg><svg style="left:146.9px;top:411.1px" width="3.4" height="5.6" viewBox="0 0 3.4 5.6"><path d="M.4.4l2.400 2.400L.4 5.200" fill="none" stroke="#3b3f4a" stroke-width=".9"></path></svg><div style="left:172.2px;top:88.1px;width:653.5px;height:332px;background:#ececf0;"></div><div style="left:345.1px;top:74.4px;width:353.4px;height:13.5px;background:#364e6f;"></div><div style="left:172px;top:74.3px;width:173.1px;height:14.8px;background:#fff29d;"></div><span style="left: 174.2px; top: 76.05px; font-size: 7.7px; line-height: 10px; color: rgb(30, 30, 30); transform: scaleX(0.9794);">Thanh221230991.sql...irai Kuriyama (52))*</span><svg style="left:323.8px;top:79.2px" width="6.4" height="4.6" viewBox="0 0 6.4 4.6"><path d="M0 2.300h2.200M2.200.5v3.600M2.200 1.200h3v2.200h-3" fill="none" stroke="#4b4b3a" stroke-width=".7"></path></svg><svg style="left:335.6px;top:78.4px" width="5.8" height="5.8" viewBox="0 0 5.8 5.8"><path d="M.4.4l5 5M5.400.4l-5 5" stroke="#2b2b2b" stroke-width=".9"></path></svg><span style="left: 349.6px; top: 76.25px; font-size: 7.7px; line-height: 10px; color: rgb(255, 255, 255); transform: scaleX(0.9459);">DESKTOP-E01FDDP\...hVien - Diagram_0*</span><span style="left: 525.7px; top: 76.25px; font-size: 7.7px; line-height: 10px; color: rgb(255, 255, 255); transform: scaleX(0.9436);">BT2_QLSinhVien.sql...Mirai Kuriyama (69))*</span><svg style="left:819.1px;top:81.35px" width="4.4" height="2.3" viewBox="0 0 4.4 2.3"><path d="M0 0H4.4L2.2 2.3Z" fill="#ffffff"></path></svg><div style="left:172px;top:87.8px;width:653.9px;height:1.3px;background:#fff29d;"></div><div class="clip" style="left:172px;top:89.1px;width:641.4px;height:153.5px;background:#fff"><div style="left:0px;top:0px;width:12.5px;height:153.5px;background:#e6e7e8;"></div><div style="left:13px;top:0px;width:3.7px;height:153.5px;background:#ffee62;"></div><div style="left:21.1px;top:-0.6px;width:0.6px;height:17.08px;background:#cdcdcd;"></div><div style="left:21.1px;top:41.12px;width:0.6px;height:8.48px;background:#cdcdcd;"></div><div style="left:21.1px;top:74.24px;width:0.6px;height:8.48px;background:#cdcdcd;"></div><div style="left:21.1px;top:107.36px;width:0.6px;height:41.6px;background:#cdcdcd;"></div><div style="left:25px;top:54.6px;width:214.55px;height:11.04px;background:#9bc8ee;"></div><div style="left:25px;top:65.64px;width:100.55px;height:11.04px;background:#9bc8ee;"></div><div style="left:25px;top:76.68px;width:252.55px;height:11.04px;background:#9bc8ee;"></div><svg style="left:18px;top:35.52px" width="5.8" height="5.8" viewBox="0 0 5.8 5.8"><rect x=".4" y=".4" width="5" height="5" fill="#fff" stroke="#a8a8a8" stroke-width=".6"></rect><path d="M1.500 2.900h2.800" stroke="#555" stroke-width=".7"></path></svg><svg style="left:18px;top:68.64px" width="5.8" height="5.8" viewBox="0 0 5.8 5.8"><rect x=".4" y=".4" width="5" height="5" fill="#fff" stroke="#a8a8a8" stroke-width=".6"></rect><path d="M1.500 2.900h2.800" stroke="#555" stroke-width=".7"></path></svg><svg style="left:18px;top:101.76px" width="5.8" height="5.8" viewBox="0 0 5.8 5.8"><rect x=".4" y=".4" width="5" height="5" fill="#fff" stroke="#a8a8a8" stroke-width=".6"></rect><path d="M1.500 2.900h2.800" stroke="#555" stroke-width=".7"></path></svg><pre class="cl" style="left:25.8px;top:-0.6px">        <i class="k">ELSE</i> <i class="g">NULL</i></pre><pre class="cl" style="left:25.8px;top:10.44px">    <i class="k">END</i><i class="g">;</i></pre><pre class="cl" style="left:25.8px;top:21.48px"><i class="c">--25.Xoá tất cả những sinh viên chưa dự thi môn nào</i></pre><pre class="cl" style="left:25.8px;top:32.52px"><i class="k">DELETE</i> <i class="k">FROM</i> DSSinhVien</pre><pre class="cl" style="left:25.8px;top:43.56px"><i class="k">WHERE</i> MaSV <i class="g">NOT</i> <i class="g">IN</i> <i class="g">(</i><i class="k">SELECT</i> <i class="k">DISTINCT</i> MaSV <i class="k">FROM</i> KetQua<i class="g">);</i></pre><pre class="cl" style="left:25.8px;top:54.6px"><i class="c">--26.Xóa những môn mà không có sinh viên học</i></pre><pre class="cl" style="left:25.8px;top:65.64px"><i class="k">DELETE</i> <i class="k">FROM</i> DMMonHoc</pre><pre class="cl" style="left:25.8px;top:76.68px"><i class="k">WHERE</i> MaMH <i class="g">NOT</i> <i class="g">IN</i> <i class="g">(</i><i class="k">SELECT</i> <i class="k">DISTINCT</i> MaMH <i class="k">FROM</i> KetQua<i class="g">);</i></pre><pre class="cl" style="left:25.8px;top:87.72px"><i class="c">--27.Thêm vào bảng khoa cột Siso, cập nhật sĩ số vào khoa từ dữ liệu sinh viên</i></pre><pre class="cl" style="left:25.8px;top:98.76px"><i class="m">UPDATE</i> DMKhoa</pre><pre class="cl" style="left:25.8px;top:109.8px"><i class="k">SET</i> Siso <i class="g">=</i> <i class="g">(</i></pre><pre class="cl" style="left:25.8px;top:120.84px">    <i class="k">SELECT</i> <i class="m">COUNT</i><i class="g">(*)</i></pre><pre class="cl" style="left:25.8px;top:131.88px">    <i class="k">FROM</i> DSSinhVien</pre><pre class="cl" style="left:25.8px;top:142.92px">    <i class="k">WHERE</i> DSSinhVien<i class="g">.</i>MaKhoa <i class="g">=</i> DMKhoa<i class="g">.</i>MaKhoa</pre><svg style="left:44.8px;top:119.1px" width="19" height="2.4"><path d="M0 0.3L1.5 2.1L3 0.3L4.5 2.1L6 0.3L7.5 2.1L9 0.3L10.5 2.1L12 0.3L13.5 2.1L15 0.3L16.5 2.1L18 0.3" fill="none" stroke="#e8362c" stroke-width=".75" stroke-linejoin="round"></path></svg><div style="left:277.95px;top:77.28px;width:0.6px;height:10.04px;background:#222;"></div></div><div style="left:813.4px;top:89.1px;width:12.5px;height:165.2px;background:#e8e8ec;"></div><div style="left:813.4px;top:89.1px;width:12.2px;height:10.2px;background:#f2f4fa;box-sizing:border-box;border:.5px solid #aeb4c4"></div><svg style="left:816px;top:90.2px" width="7" height="8" viewBox="0 0 7 8"><path d="M3.500.6v6.800M.8 4h5.400" stroke="#1e1e1e" stroke-width=".9"></path><path d="M3.500 0l1.400 1.600H2.100zM3.500 8L2.100 6.400h2.800z" fill="#1e1e1e"></path></svg><svg style="left:816.9px;top:104px" width="5.4" height="3" viewBox="0 0 5.4 3"><path d="M0 3L2.700 0l2.700 3z" fill="#868999"></path></svg><svg style="left:816.9px;top:235.8px" width="5.4" height="3" viewBox="0 0 5.4 3"><path d="M0 0h5.400L2.700 3z" fill="#868999"></path></svg><div style="left:814.2px;top:110.9px;width:2.8px;height:7.9px;background:#6cd66c;"></div><div style="left:814.2px;top:118.8px;width:2.8px;height:104.8px;background:#ffe95a;"></div><div style="left:814.2px;top:223.6px;width:2.8px;height:2.4px;background:#6cd66c;"></div><div style="left:817px;top:180.7px;width:4.5px;height:2.8px;background:#c6c7cd;"></div><div style="left:821.7px;top:180px;width:3.6px;height:3.6px;background:#f00014;"></div><div style="left:821.7px;top:187.2px;width:3.6px;height:3.7px;background:#f00014;"></div><div style="left:813px;top:186.5px;width:12.6px;height:1.4px;background:#1414b4;"></div><div style="left:172px;top:242.6px;width:641.4px;height:11.7px;background:#e8e8ec;"></div><div style="left:172px;top:242.6px;width:39.2px;height:11.2px;background:#fdfdff;box-sizing:border-box;border:.5px solid #c8ccd8"></div><span style="left: 174.4px; top: 243.35px; font-size: 7.5px; line-height: 10px; color: rgb(30, 30, 30); transform: scaleX(0.9591);">100 %</span><svg style="left:206.4px;top:248.05px" width="3" height="1.7" viewBox="0 0 3 1.7"><path d="M0 0H3L1.5 1.7Z" fill="#1e1e1e"></path></svg><svg style="left:216px;top:245.7px" width="3.2" height="5.4" viewBox="0 0 3.2 5.4"><path d="M3.200 0v5.400L0 2.700z" fill="#868999"></path></svg><div style="left:222.5px;top:245.2px;width:353px;height:6.3px;background:#c2c3c9;"></div><svg style="left:805.8px;top:245.7px" width="3.2" height="5.4" viewBox="0 0 3.2 5.4"><path d="M0 0v5.400l3.200-2.700z" fill="#868999"></path></svg><div style="left:172px;top:254.3px;width:653.9px;height:14.2px;background:#eeeef2;"></div><div style="left:172px;top:256.1px;width:48px;height:12.4px;background:#f7f7fa;box-sizing:border-box;border:.5px solid #d5d7df;border-bottom:0"></div><svg style="left:175.7px;top:258.7px" width="6.4" height="6" viewBox="0 0 6.4 6"><path d="M.3 2.400h3v3.300h-3z" fill="#eee" stroke="#444" stroke-width=".6"></path><path d="M3.400.4h2.700v4h-2.700z" fill="#777" stroke="#333" stroke-width=".5"></path></svg><span style="left: 185.9px; top: 256.35px; font-size: 7.6px; line-height: 10px; color: rgb(30, 30, 30); transform: scaleX(0.901);">Messages</span><div style="left:172px;top:268.5px;width:640.6px;height:125.9px;background:#ffffff;"></div><pre class="ms" style="left: 189.3px; top: 278.8px; letter-spacing: -0.114px;">(0 rows affected)</pre><pre class="ms" style="left: 188.1px; top: 298.9px; letter-spacing: 0.001px;">Completion time: 2024-03-07T01:05:50.3728673+07:00</pre><div style="left:812.6px;top:268.5px;width:13.3px;height:125.9px;background:#e8e8ec;"></div><svg style="left:816.6px;top:273px" width="5.4" height="3" viewBox="0 0 5.4 3"><path d="M0 3L2.700 0l2.700 3z" fill="#868999"></path></svg><div style="left:815.3px;top:280.1px;width:5.6px;height:72.7px;background:#c2c3c9;"></div><svg style="left:816.6px;top:386.7px" width="5.4" height="3" viewBox="0 0 5.4 3"><path d="M0 0h5.400L2.700 3z" fill="#868999"></path></svg><div style="left:172px;top:394.4px;width:653.9px;height:13.1px;background:#e8e8ec;"></div><div style="left:172px;top:394.9px;width:41.6px;height:11.6px;background:#fdfdff;box-sizing:border-box;border:.5px solid #c8ccd8"></div><span style="left: 174.6px; top: 395.45px; font-size: 7.5px; line-height: 10px; color: rgb(30, 30, 30); transform: scaleX(0.9591);">100 %</span><svg style="left:207.9px;top:400.25px" width="3" height="1.7" viewBox="0 0 3 1.7"><path d="M0 0H3L1.5 1.7Z" fill="#1e1e1e"></path></svg><svg style="left:216.6px;top:398px" width="3.2" height="5.4" viewBox="0 0 3.2 5.4"><path d="M3.200 0v5.400L0 2.700z" fill="#cfd0d8"></path></svg><svg style="left:805px;top:398px" width="3.2" height="5.4" viewBox="0 0 3.2 5.4"><path d="M0 0v5.400l3.200-2.700z" fill="#cfd0d8"></path></svg><div style="left:172px;top:407.5px;width:653.9px;height:12.9px;background:#f0e68c;"></div><svg style="left:174.8px;top:411px" width="6.4" height="6.4" viewBox="0 0 6.4 6.4"><circle cx="3.200" cy="3.200" r="3.100" fill="#2e9b3c"></circle><path d="M1.600 3.300l1.200 1.200 2.100-2.400" fill="none" stroke="#fff" stroke-width=".9"></path></svg><span style="left: 183.7px; top: 408.95px; font-size: 7.9px; line-height: 10px; color: rgb(30, 30, 30); transform: scaleX(0.9438);">Query executed successfully.</span><div style="left:471.7px;top:408.7px;width:0.6px;height:10.6px;background:#d9cf7a;"></div><div style="left:600.2px;top:408.7px;width:0.6px;height:10.6px;background:#d9cf7a;"></div><div style="left:702.7px;top:408.7px;width:0.6px;height:10.6px;background:#d9cf7a;"></div><div style="left:749.4px;top:408.7px;width:0.6px;height:10.6px;background:#d9cf7a;"></div><div style="left:786.7px;top:408.7px;width:0.6px;height:10.6px;background:#d9cf7a;"></div><span style="left: 475.7px; top: 409.05px; font-size: 7.9px; line-height: 10px; color: rgb(30, 30, 30); transform: scaleX(0.8665);">DESKTOP-E01FDDP\SQLEXPRESS ...</span><span style="left: 604.8px; top: 409.05px; font-size: 7.9px; line-height: 10px; color: rgb(30, 30, 30); transform: scaleX(0.903);">DESKTOP-E01FDDP\Mirai ...</span><span style="left: 706.5px; top: 409.05px; font-size: 7.9px; line-height: 10px; color: rgb(30, 30, 30); transform: scaleX(0.9212);">QLSinhVien</span><span style="left: 753.6px; top: 409.05px; font-size: 7.9px; line-height: 10px; color: rgb(30, 30, 30); transform: scaleX(0.9335);">00:00:00</span><span style="left: 790.9px; top: 409.05px; font-size: 7.9px; line-height: 10px; color: rgb(30, 30, 30); transform: scaleX(0.9499);">0 rows</span><div style="left:0px;top:425.2px;width:829.3px;height:15.9px;background:#007acc;"></div><svg style="left:2.9px;top:430.2px" width="9.6" height="7" viewBox="0 0 9.6 7"><path d="M2 .6h7l-1.400 5.800H.6z" fill="none" stroke="#fff" stroke-width=".8"></path></svg><span style="left: 18.7px; top: 428.35px; font-size: 7.9px; line-height: 10px; color: rgb(255, 255, 255); transform: scaleX(0.8847);">Ready</span><span style="left: 337.7px; top: 428.35px; font-size: 7.9px; line-height: 10px; color: rgb(255, 255, 255); transform: scaleX(0.9106);">Ln 149</span><span style="left: 397px; top: 428.35px; font-size: 7.9px; line-height: 10px; color: rgb(255, 255, 255); transform: scaleX(0.9767);">Col 54</span><span style="left: 456.6px; top: 428.35px; font-size: 7.9px; line-height: 10px; color: rgb(255, 255, 255); transform: scaleX(0.9394);">Ch 54</span><span style="left: 545.3px; top: 428.35px; font-size: 7.9px; line-height: 10px; color: rgb(255, 255, 255); transform: scaleX(0.9037);">INS</span><div style="left:0px;top:441.1px;width:829.3px;height:25.5px;background:#222b2f;"></div><div style="left:0px;top:441.1px;width:31.2px;height:25.5px;background:#1b2a30;"></div><svg style="left:11px;top:449.4px" width="9.6" height="9.6" viewBox="0 0 9.6 9.6"><path d="M0 1.300l4-.55v3.800H0zM4.600.65L9.600 0v4.550h-5zM0 5.100h4v3.800l-4-.55zM4.600 5.100h5V9.600l-5-.7z" fill="#fff"></path></svg><div style="left:31.2px;top:441.5px;width:134.9px;height:25.1px;background:#f3f3f3;"></div><div style="left:31.2px;top:465.7px;width:134.9px;height:0.9px;background:#bdbdbd;"></div><svg style="left:40.4px;top:449.6px" width="9" height="9" viewBox="0 0 9 9"><circle cx="5.600" cy="3.400" r="2.700" fill="none" stroke="#1e1e1e" stroke-width=".8"></circle><path d="M3.700 5.300L.6 8.400" stroke="#1e1e1e" stroke-width=".9"></path></svg><span style="left: 57.8px; top: 448.65px; font-size: 9.3px; line-height: 12px; color: rgb(30, 30, 30); transform: scaleX(1.0335);">Tìm kiếm</span><svg style="left:166.1px;top:441.2px;overflow:hidden" width="52.300" height="25.600" viewBox="0 0 52.300 25.600" preserveAspectRatio="none">
<rect width="52.300" height="25.600" fill="#6c82ae"></rect>
<path d="M0 0h4L0 5z" fill="#93c44c"></path>
<path d="M8 0h3l5 4.500-2 1.500z" fill="#7fb440"></path>
<path d="M43 0h9.300v7z" fill="#a6cb58"></path>
<ellipse cx="1.500" cy="15.500" rx="7" ry="10" fill="none" stroke="#8299c6" stroke-width="2.200"></ellipse>
<ellipse cx="1" cy="15.500" rx="5.500" ry="8.500" fill="#8bc53f" stroke="#3f5330" stroke-width=".4"></ellipse>
<circle cx="49.500" cy="14.500" r="10.800" fill="none" stroke="#8ea6d0" stroke-width="2.600"></circle>
<circle cx="49.800" cy="14.500" r="8.600" fill="#9cc544"></circle>
<circle cx="17.500" cy="13.500" r="8" fill="none" stroke="#9db3da" stroke-width="5.400"></circle>
<circle cx="36" cy="19" r="7.500" fill="none" stroke="#91a8d2" stroke-width="4.400"></circle>
<path d="M7 28L38-2.500" stroke="#c6d3ee" stroke-width="7"></path>
<path d="M21.500 28L52-2.500" stroke="#bdcbe9" stroke-width="6.600"></path>
<path d="M14.500 27.500L45-2.500" stroke="#6fa83a" stroke-width="1.700" stroke-dasharray="3 3.200"></path>
<path d="M14 28L44.500-2.500" stroke="#61749c" stroke-width=".7" opacity=".6"></path>
<rect x="16.400" y="2.300" width="4.200" height="2.600" rx=".9" fill="#2468e0" transform="rotate(-32 18.500 3.600)"></rect>
<rect x="38.800" y="2.300" width="4.200" height="2.600" rx=".9" fill="#2468e0" transform="rotate(-45 40.900 3.600)"></rect>
<rect x="23.400" y="8.700" width="4.200" height="2.600" rx=".9" fill="#f0c430" transform="rotate(-40 25.500 10)"></rect>
<rect x="30" y="8.900" width="4.200" height="2.600" rx=".9" fill="#2468e0" transform="rotate(-45 32.100 10.200)"></rect>
<rect x="14.800" y="14.200" width="4.200" height="2.600" rx=".9" fill="#d63a3a" transform="rotate(-45 16.900 15.500)"></rect>
<rect x="25.800" y="15.400" width="4.200" height="2.600" rx=".9" fill="#d63a3a" transform="rotate(-45 27.900 16.700)"></rect>
<rect x="10" y="21.400" width="4.200" height="2.600" rx=".9" fill="#2468e0" transform="rotate(-35 12.100 22.700)"></rect>
<rect x="32.400" y="20.800" width="4.200" height="2.600" rx=".9" fill="#e8cf3c" transform="rotate(-55 34.500 22.100)"></rect>
</svg><svg style="left:228px;top:449.4px" width="11" height="9.4" viewBox="0 0 11 9.4"><path d="M1.500.8C3 1.800 6 1.800 7.500.8M1.500 8.600C3 7.600 6 7.600 7.500 8.600" fill="none" stroke="#e8e8e8" stroke-width=".9"></path><rect x="1.900" y="2.800" width="5.200" height="3.800" fill="none" stroke="#e8e8e8" stroke-width=".9"></rect><path d="M.5 1.500v6.400M9.800 1.200v1M9.800 3.400v4.800" stroke="#e8e8e8" stroke-width=".9"></path></svg><svg style="left:259.8px;top:447.9px" width="14.4" height="12" viewBox="0 0 14.4 12"><path d="M.4 1.200h5l1 1.400h7.600v1.600H.4z" fill="#e9a92c"></path><path d="M.4 3h13.600v8.400H.4z" fill="#fbd04f"></path><path d="M2.400 6.200h9.600v5.200H2.400z" fill="#3d8fdc"></path><path d="M4.800 8h4.800v3.400H4.800z" fill="#fbd04f"></path><path d="M.4 10.800h13.600v.8H.4z" fill="#d99a1e"></path></svg><svg style="left:291.3px;top:446px" width="16.2" height="16.2" viewBox="0 0 15.4 15.4"><defs><linearGradient id="eg" x1="0" y1="0" x2="1" y2="1"><stop offset="0" stop-color="#2f8fe0"></stop><stop offset=".55" stop-color="#1fb3c8"></stop><stop offset="1" stop-color="#53c44a"></stop></linearGradient></defs><circle cx="7.700" cy="7.700" r="7.500" fill="url(#eg)"></circle><path d="M.4 9.400C.6 4.600 5.400 2.800 9 4.400c2 1 2.600 3 1.400 4.200-.9.700-3.300.5-3.300-.9 0-1.600-2.100-2.100-3.300-.6C2.200 9 3.400 14 8.400 14.900 3.800 15.600.2 12.800.4 9.400z" fill="#0c59a4"></path><path d="M7.100 7.700c0 2.200 2.700 3.200 5 2.300 1.200-.6.800.4.200 1.400-1.700 2.600-6 2.400-7.400-.2-.9-1.900 0-3.700 1.200-4.200.7-.2 1 .1 1 .7z" fill="#1b7fd3"></path></svg><svg style="left:324.2px;top:446.6px" width="14.8" height="14.6" viewBox="0 0 14.8 14.6"><path d="M4.400 3.400V1.600c0-.5.300-.8.800-.8h4.400c.5 0 .8.300.8.800v1.800" fill="none" stroke="#29a8e0" stroke-width="1"></path><rect x=".5" y="2.800" width="13.800" height="11.400" rx="1.800" fill="#f5f5f5"></rect><rect x="4.300" y="5.300" width="2.800" height="2.800" fill="#f25022"></rect><rect x="7.700" y="5.300" width="2.800" height="2.800" fill="#7fba00"></rect><rect x="4.300" y="8.700" width="2.800" height="2.800" fill="#00a4ef"></rect><rect x="7.700" y="8.700" width="2.800" height="2.800" fill="#ffb900"></rect></svg><svg style="left:355.8px;top:446.9px" width="16.4" height="14" viewBox="0 0 16.4 14"><path d="M.4 5.600L8.200.4l7.800 5.200z" fill="#1567c2"></path><path d="M.4 5.600h15.600v8H.4z" fill="#2d9bf0"></path><path d="M1.600 5.400h13.200L8.200 10.600z" fill="#f4f8fd"></path><path d="M.4 13.600L6.800 9l1.400 1.200L9.600 9l6.400 4.600z" fill="#1c86e3"></path></svg><svg style="left:389.4px;top:447.6px" width="14" height="13" viewBox="0 0 14 13"><path d="M3.600.6l9.800 2.200-1 6.400-9.800-2z" fill="#3aa0e8"></path><path d="M4.600 1.800l7.800 1.700-.7 4.600-7.800-1.600z" fill="#58b6f3"></path><path d="M.4 9.600l6-1.600 5.400 1.600-5.600 2.600z" fill="#e4e7ec"></path><path d="M2.600 9.800l3.600-.9 3.200.9-3.400 1.500z" fill="#8d96a5"></path></svg><svg style="left:421px;top:446.1px" width="16" height="16" viewBox="0 0 16 16"><circle cx="8" cy="8" r="7.800" fill="#e33b2e"></circle><path d="M8 8L1.240 4.100A7.800 7.800 0 0 0 8 15.800z" fill="#2ba24c"></path><path d="M8 8v7.800A7.800 7.800 0 0 0 14.760 4.100z" fill="#fbc116"></path><path d="M8 8l6.760-3.900A7.800 7.800 0 0 0 1.240 4.100z" fill="#e33b2e"></path><circle cx="8" cy="8" r="3.700" fill="#fff"></circle><circle cx="8" cy="8" r="2.900" fill="#3b7ded"></circle></svg><svg style="left:453.4px;top:446.1px" width="16.4" height="16.4" viewBox="0 0 16.4 16.4"><rect x=".4" y=".4" width="15.600" height="15.600" rx="4.600" fill="#1b63d8"></rect><path d="M2.600 1h11.200c1 0 1.800.8 1.800 1.800v8.400c0 1-.8 1.800-1.800 1.800H6.400L3.800 15v-2.200C2.600 12.400 1.400 11.600 1.400 10V2.800C1.400 1.800 1.800 1 2.600 1z" fill="#fdfdfd"></path><text x="8.400" y="9" font-family="Liberation Sans" font-weight="bold" font-size="4.600" text-anchor="middle" fill="#1b63d8">Zalo</text></svg><div style="left:478px;top:441.1px;width:32px;height:25.5px;background:#4a5054;"></div><svg style="left:486.2px;top:446.3px" width="15.6" height="15.6" viewBox="0 0 15.6 15.6">
<path d="M1 9.200v4.800h4.400" fill="none" stroke="#3bb03a" stroke-width="1.300"></path>
<path d="M10.200 1.200h4.400v4" fill="none" stroke="#3bb03a" stroke-width="1.300"></path>
<rect x="1.600" y="1.600" width="7.400" height="9" rx="1.400" fill="#fbd83c"></rect>
<ellipse cx="5.300" cy="2.200" rx="3.700" ry="1.400" fill="#f6b23a"></ellipse>
<path d="M7.400 8.200l6.200 6M13.600 8.200l-6.200 6" stroke="#e8762c" stroke-width="1.700"></path></svg><svg style="left:518.5px;top:446.2px" width="15.4" height="15.4" viewBox="0 0 15.4 15.4"><rect width="15.400" height="15.400" fill="#1f2f5c"></rect><path d="M7.200 2.600l4 2v4.600l-4 2.200-4-2.200V4.600z" fill="#3a6fd8"></path><path d="M7.200 2.600l4 2-4 2-4-2z" fill="#5b8df0"></path><path d="M5 6.400c.6-.8 1.400-.8 2 0M7.600 6.400c.6-.8 1.400-.8 2 0" fill="none" stroke="#dfe8ff" stroke-width=".5"></path><rect x="9.600" y="9.600" width="5" height="5" fill="#dbe6ff"></rect><rect x="10.800" y="10.400" width="2.600" height="1.600" fill="#3a6fd8"></rect></svg><div style="left:417.2px;top:465.1px;width:23.6px;height:1.5px;background:#85c0ee;"></div><div style="left:449.6px;top:465.1px;width:24.4px;height:1.5px;background:#85c0ee;"></div><div style="left:478px;top:465.1px;width:32px;height:1.5px;background:#85c0ee;"></div><div style="left:512.6px;top:465.1px;width:27px;height:1.5px;background:#85c0ee;"></div><svg style="left:608px;top:452.4px" width="7.4" height="4.2" viewBox="0 0 7.4 4.2"><path d="M.4 3.800L3.700.5 7 3.800" fill="none" stroke="#f0f0f0" stroke-width=".9"></path></svg><svg style="left:623.6px;top:449.3px" width="6.6" height="9.8" viewBox="0 0 6.6 9.8"><rect width="6.600" height="9.800" rx="3.300" fill="#1e7be0"></rect><path d="M1.900 3.200l2.900 3.200-1.500 1.500V1.900l1.500 1.500-2.900 3.200" fill="none" stroke="#fff" stroke-width=".7"></path></svg><svg style="left:637.9px;top:449.5px" width="9" height="9.6" viewBox="0 0 9 9.6"><rect x="1.200" y="3.200" width="5" height="3.800" rx="1" fill="none" stroke="#e8e8e8" stroke-width=".7"></rect><path d="M6.200 4.600L8.400 3.600v3L6.200 5.600" fill="none" stroke="#e8e8e8" stroke-width=".7"></path><path d="M1.800 2.400C2.800.4 5.600.4 6.400 2.400M1.200 7.800h5.200M1.200 9h5.200" fill="none" stroke="#e8e8e8" stroke-width=".7"></path></svg><svg style="left:652.9px;top:451.2px" width="11" height="6.6" viewBox="0 0 11 6.6"><rect x="2.600" y="1.300" width="7.800" height="4.400" fill="none" stroke="#e8e8e8" stroke-width=".8"></rect><path d="M1.800 2.600v1.800" stroke="#e8e8e8" stroke-width="1"></path><rect x="6.400" y="2.200" width="3.200" height="2.600" fill="#e8e8e8"></rect><path d="M.2 1.200L2.600.4l.8 1.800-1 .8z" fill="#e8e8e8"></path></svg><svg style="left:669.5px;top:450.5px" width="9" height="8.4" viewBox="0 0 9 8.4"><circle cx="1.600" cy="7" r="1" fill="#e8e8e8"></circle><path d="M.8 4.200A3.600 3.600 0 0 1 4.400 7.800M.8 2A5.800 5.800 0 0 1 6.600 7.800M.8 0A7.800 7.800 0 0 1 8.600 7.800" fill="none" stroke="#bfc3c6" stroke-width=".8"></path></svg><svg style="left:683.6px;top:450.2px" width="10.4" height="8.4" viewBox="0 0 10.4 8.4"><path d="M.5 2.900h1.900L4.800.7v7L2.400 5.500H.5z" fill="none" stroke="#e8e8e8" stroke-width=".7"></path><path d="M6.200 2.900c.8.700.8 1.900 0 2.600M7.600 1.800c1.400 1.400 1.400 3.400 0 4.800" fill="none" stroke="#c5c9cc" stroke-width=".7"></path></svg><span style="left: 702.7px; top: 443.35px; font-size: 8.1px; line-height: 10px; color: rgb(255, 255, 255); transform: scaleX(0.8732);">VIE</span><span style="left: 705px; top: 454.95px; font-size: 8.1px; line-height: 10px; color: rgb(255, 255, 255); transform: scaleX(0.7617);">TL</span><span style="left: 731.6px; top: 443.35px; font-size: 8.1px; line-height: 10px; color: rgb(255, 255, 255); transform: scaleX(0.9232);">1:06 SA</span><span style="left: 724.9px; top: 454.95px; font-size: 8.1px; line-height: 10px; color: rgb(255, 255, 255); transform: scaleX(0.9992);">07/03/2024</span><svg style="left:776.6px;top:448.5px" width="17" height="17" viewBox="0 0 17 17"><path d="M1 .6h10.400v7.900H6.200L4 10.800V8.500H1z" fill="#fff"></path><path d="M2.800 2.900h6.800M2.800 4.900h6.800" stroke="#9aa0a6" stroke-width=".7"></path><circle cx="11.300" cy="10.900" r="5.100" fill="#2a3136" stroke="#9097a0" stroke-width=".7"></circle><text x="11.300" y="13.700" font-family="Liberation Sans" font-weight="bold" font-size="7.800" text-anchor="middle" fill="#fff">5</text></svg><svg style="left:802.1px;top:447.5px" width="14.6" height="14" viewBox="0 0 14.6 14"><defs><linearGradient id="cp1" x1="0" y1="0" x2="0" y2="1"><stop offset="0" stop-color="#1a8bf0"></stop><stop offset=".5" stop-color="#2bc59a"></stop><stop offset="1" stop-color="#f4d435"></stop></linearGradient><linearGradient id="cp2" x1="0" y1="0" x2="0" y2="1"><stop offset="0" stop-color="#b14df0"></stop><stop offset="1" stop-color="#f0477c"></stop></linearGradient></defs><path d="M3.400.6h4.400c1.200 0 1.900.7 1.600 1.900L8 9.400c-.3 1.200-1 1.800-2.200 1.800H1.600C.4 11.200 0 10.400.3 9.200L1.800 2C2 1.100 2.400.6 3.400.6z" fill="url(#cp1)"></path><path d="M6.600.6h1.600c1.400 0 2.200 1 1.800 2.200l-.6 1.600H7.800z" fill="#0a35c8"></path><path d="M9 3.400h3.800c1.200 0 1.700.8 1.400 2l-1 4.200c-.3 1.200-1 1.600-2.200 1.600H7.200z" fill="url(#cp2)"></path><rect x="4.400" y="9.400" width="8.400" height="4.200" rx="1" fill="#f0c419"></rect><text x="8.600" y="12.700" font-family="Liberation Sans" font-weight="bold" font-size="3.200" text-anchor="middle" fill="#1e1e1e">PRE</text></svg><div style="left:827px;top:441.4px;width:0.6px;height:25.2px;background:#8b9399;"></div></div></div></div><span id="ft" style="transform: scaleX(1.0976);">Dit document is beschikbaar op</span><svg style="position:absolute;left:588.5px;top:1602px" width="45.900" height="46.100" viewBox="130 120 910 916"><path d="M435 120H770Q805 120 797 155L735 415L730 430H400Q370 430 378 465L437 715Q440 730 432 735A305 308 0 0 1 435 120Z" fill="#000"></path><g transform="rotate(180 585 578)"><path d="M435 120H770Q805 120 797 155L735 415L730 430H400Q370 430 378 465L437 715Q440 730 432 735A305 308 0 0 1 435 120Z" fill="#000"></path></g></svg><span id="lg" style="transform: scaleX(1.018);">studeersnel</span><div id="bl"></div></body></html>
